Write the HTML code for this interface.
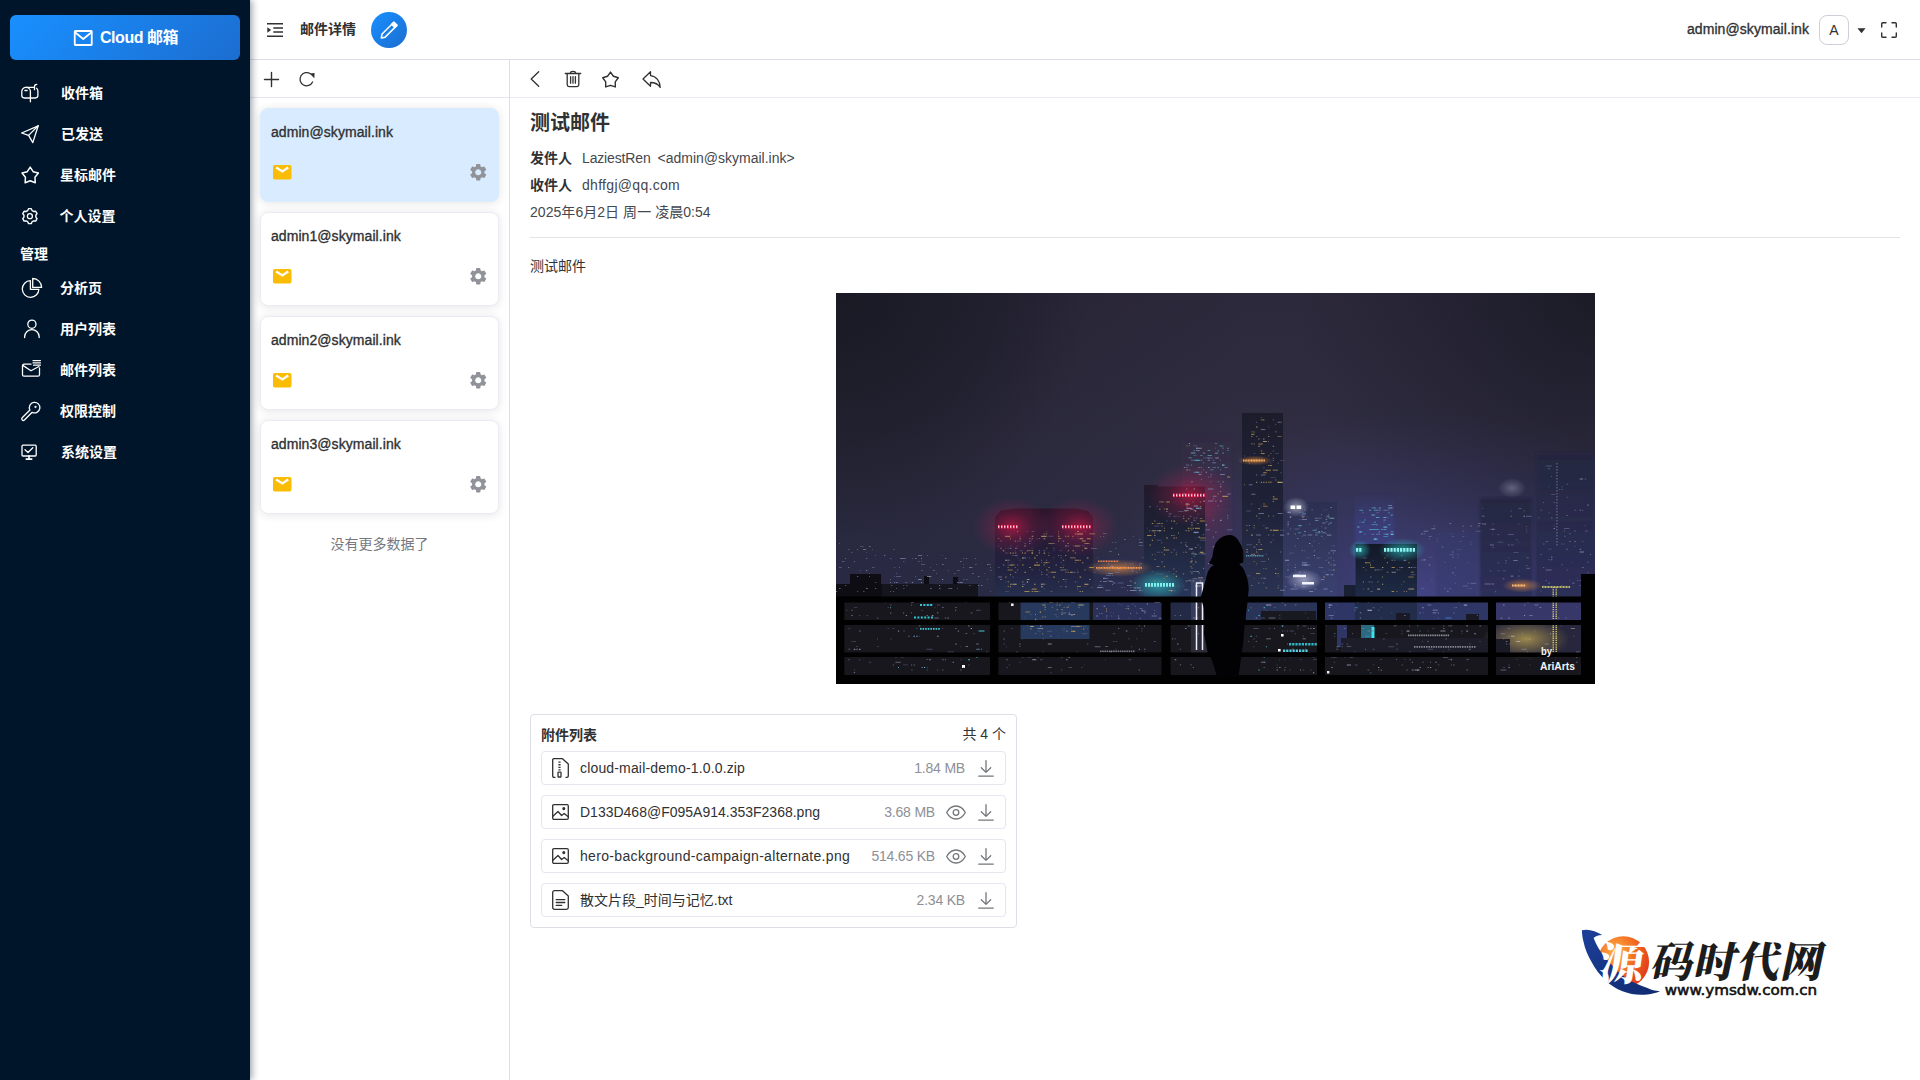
<!DOCTYPE html>
<html lang="zh-CN">
<head>
<meta charset="utf-8">
<title>Cloud 邮箱</title>
<style>
*{box-sizing:border-box;margin:0;padding:0}
html,body{width:1920px;height:1080px;overflow:hidden;background:#fff}
body{font-family:"Liberation Sans","Noto Sans CJK SC",sans-serif;font-size:14px;color:#303133;position:relative}
.abs{position:absolute}
svg{display:block;overflow:visible}
/* sidebar */
#side{position:absolute;left:0;top:0;width:250px;height:1080px;background:#001529;z-index:5;box-shadow:2px 0 7px rgba(0,21,41,.4)}
#logo{position:absolute;left:10px;top:15px;width:230px;height:45px;border-radius:6px;background:linear-gradient(135deg,#1890ff 0%,#1c6dd0 100%);color:#fff;font-weight:bold;font-size:16px}
#logo .t{position:absolute;left:90px;top:13px;line-height:20px;white-space:nowrap;letter-spacing:-0.45px}
.mi{position:absolute;left:0;width:250px;height:41px;color:#fff;font-weight:bold;font-size:14px}
.mi .tx{position:absolute;left:61px;top:11px;line-height:20px;white-space:nowrap}
.mi svg{position:absolute;left:20px;top:10px;width:20px;height:20px;fill:none;stroke:#fff;stroke-width:1.3;stroke-linecap:round;stroke-linejoin:round}
.grp{position:absolute;left:20px;top:244px;color:#fff;font-weight:bold;font-size:14px;line-height:20px}
/* header */
#hdr{position:absolute;left:250px;top:0;width:1670px;height:60px;border-bottom:1px solid #dcdfe6;background:#fff}
/* account panel */
#acc{position:absolute;left:250px;top:60px;width:260px;height:1020px;border-right:1px solid #dcdfe6;background:#fff}
.tb{position:absolute;left:0;top:0;height:38px;border-bottom:1px solid #e4e7ed}
.card{position:absolute;left:10px;width:239px;height:94px;border-radius:8px;background:#fff;border:1px solid #e9ecf3;box-shadow:0 1px 10px rgba(0,0,0,.11)}
.card.on{background:#d9ecff;border-color:#d9ecff}
.card .em{position:absolute;left:10px;top:12.500px;font-size:14px;font-weight:normal;-webkit-text-stroke:0.35px #303133;color:#303133;line-height:20px;white-space:nowrap;letter-spacing:0.07px}
.card .env{position:absolute;left:11.500px;top:56.300px}
.card .gear{position:absolute;left:206.700px;top:53.400px}
/* mail */
#mail{position:absolute;left:510px;top:60px;width:1410px;height:1020px;background:#fff}
.row{position:absolute;left:10px;width:465px;height:34px;border:1px solid #e4e7ed;border-radius:4px;background:#fff}
.row .nm{position:absolute;left:38px;top:6px;line-height:20px;font-size:14px;color:#303133;white-space:nowrap}
.row .sz{position:absolute;top:6px;line-height:20px;font-size:14px;color:#8d9097;white-space:nowrap;text-align:right;letter-spacing:-0.2px}
.row svg{position:absolute}
</style>
</head>
<body>

<!-- ============ SIDEBAR ============ -->
<div id="side">
  <div id="logo">
    <svg class="abs" style="left:62.500px;top:15px" width="20.500" height="16" viewBox="0 0 19 16" fill="none" stroke="#fff" stroke-width="1.800" stroke-linejoin="round" stroke-linecap="round"><rect x="1" y="1" width="17" height="14" rx=".5"/><path d="M1.5 2.5 9.5 9l8-6.5"/></svg>
    <span class="t">Cloud 邮箱</span>
  </div>
  <div class="mi" style="top:72px"><svg viewBox="0 0 20 20"><path d="M6 5.400C3.500 5.400 1.800 7.300 1.800 9.600v4c0 1.400 1.100 2.400 2.500 2.400h11.100c1.400 0 2.500-1 2.500-2.400V9.200c0-1.200-.5-2.300-1.300-2.900"/><path d="M6 5.400c2.500 0 4.400 1.900 4.400 4.200v10.200"/><path d="M6 5.400h8"/><path d="M14.500 7.700V4.600c0-1.300.9-2.100 2.300-2.200"/><path d="M4.900 8.500h2.200"/></svg><span class="tx">收件箱</span></div>
  <div class="mi" style="top:113px"><svg viewBox="0 0 20 20"><path d="M18.200 2.800 1.600 10l7 2.400 4.200 7.200z"/><path d="M8.600 12.400l9.600-9.600"/></svg><span class="tx">已发送</span></div>
  <div class="mi" style="top:154px"><svg viewBox="0 0 20 20"><path d="M10.20 3.15L13.14 7.70L18.38 9.09L14.96 13.30L15.25 18.71L10.20 16.75L5.15 18.71L5.44 13.30L2.02 9.09L7.26 7.70z" stroke-width="1.500"/></svg><span class="tx" style="left:60px">星标邮件</span></div>
  <div class="mi" style="top:195px"><svg viewBox="0 0 20 20"><circle cx="9.900" cy="11.150" r="2.500"/><path d="M8.55 3.67L11.25 3.67L12.09 5.56L13.64 6.46L15.70 6.24L17.05 8.58L15.83 10.26L15.83 12.04L17.05 13.72L15.70 16.06L13.64 15.84L12.09 16.74L11.25 18.63L8.55 18.63L7.71 16.74L6.16 15.84L4.10 16.06L2.75 13.72L3.97 12.04L3.97 10.26L2.75 8.58L4.10 6.24L6.16 6.46L7.71 5.56z" stroke-width="1.400"/></svg><span class="tx" style="left:59.5px">个人设置</span></div>
  <div class="grp">管理</div>
  <div class="mi" style="top:267px"><svg viewBox="0 0 20 20"><path d="M10.400 3.700A8.300 8.300 0 1 0 18.900 12.300H10.400z"/><path d="M12.700 1.500v8.900h8.900a8.900 8.900 0 0 0-8.900-8.900z"/></svg><span class="tx" style="left:60px">分析页</span></div>
  <div class="mi" style="top:308px"><svg viewBox="0 0 20 20"><circle cx="11.900" cy="6.200" r="4.100"/><path d="M4.600 19.500v-.6a7.300 7.300 0 0 1 14.600 0v.6"/></svg><span class="tx" style="left:60px">用户列表</span></div>
  <div class="mi" style="top:349px"><svg viewBox="0 0 20 20"><path d="M11 5.200H4c-.9 0-1.500.6-1.500 1.500v9c0 .9.600 1.500 1.500 1.500h14c.9 0 1.500-.6 1.500-1.500V9"/><path d="M2.800 6.400l8.200 5.400 7.900-4.300"/><path d="M13 1.600h7.400M13 3.900h7.400M13.500 6.200h6.900"/></svg><span class="tx" style="left:60px">邮件列表</span></div>
  <div class="mi" style="top:390px"><svg viewBox="0 0 20 20"><path d="M12.160 12.300 4.430 20.030a1.600 1.600 0 0 1-2.260-2.260L9.900 10.040a5.300 5.300 0 1 1 2.260 2.260z"/><circle cx="15.400" cy="6.900" r=".7" fill="#fff" stroke-width=".8"/></svg><span class="tx" style="left:60px">权限控制</span></div>
  <div class="mi" style="top:431px"><svg viewBox="0 0 20 20"><rect x="2" y="4.200" width="14.200" height="10.800" rx="1"/><path d="M6.200 18.100h5.600M9 15v3" stroke-width="1.600"/><path d="M5 8.700l3 2.800 4.800-4.700"/></svg><span class="tx">系统设置</span></div>
</div>

<!-- ============ HEADER ============ -->
<div id="hdr">
  <svg class="abs" style="left:17px;top:22px" width="16" height="16" viewBox="0 0 16 16" fill="none" stroke="#303133" stroke-width="1.4"><path d="M0 1.800h16M6.300 6h9.700M6.300 10h9.700M0 14.200h16"/><path d="M0.300 5.300v5.400L4.200 8z" fill="#303133" stroke="none"/></svg>
  <div class="abs" style="left:50px;top:19px;line-height:20px;font-weight:bold;font-size:14px;color:#303133;white-space:nowrap">邮件详情</div>
  <div class="abs" style="left:121px;top:12px;width:36px;height:36px;border-radius:50%;background:linear-gradient(135deg,#1890ff 0%,#1c6dd0 100%)">
    <svg class="abs" style="left:7px;top:7px" width="22" height="22" viewBox="0 0 20 20" fill="none" stroke="#fff" stroke-width="1.400" stroke-linejoin="round"><path d="M3 17.200l.7-3.500L14.400 3l2.800 2.800L6.500 16.500z"/><path d="M12.500 4.900l2.800 2.800 1.900-1.900L14.400 3z" fill="#fff"/></svg>
  </div>
  <div class="abs" style="left:1437px;top:19px;line-height:20px;font-weight:normal;-webkit-text-stroke:0.35px #303133;font-size:14px;color:#303133;white-space:nowrap;letter-spacing:0.07px">admin@skymail.ink</div>
  <div class="abs" style="left:1569px;top:15px;width:30px;height:30px;border:1px solid #cdd0d6;border-radius:8px;text-align:center;line-height:28px;font-size:14px;color:#303133">A</div>
  <svg class="abs" style="left:1606.500px;top:28px" width="9" height="5.500" viewBox="0 0 10 6"><path d="M0.500 0.300h9L5 5.700z" fill="#303133"/></svg>
  <svg class="abs" style="left:1631px;top:22px" width="16" height="16" viewBox="0 0 16 16" fill="none" stroke="#303133" stroke-width="1.400" stroke-linecap="round" stroke-linejoin="round"><path d="M0.700 5V1.700c0-.6.400-1 1-1H5M11 .7h3.300c.6 0 1 .4 1 1V5M15.300 11v3.300c0 .6-.4 1-1 1H11M5 15.300H1.700c-.6 0-1-.4-1-1V11"/></svg>
</div>

<!-- ============ ACCOUNT LIST ============ -->
<div id="acc">
  <div class="tb" style="width:259px"></div>
  <svg class="abs" style="left:14px;top:12px" width="15" height="15" viewBox="0 0 15 15" fill="none" stroke="#303133" stroke-width="1.400" stroke-linecap="round"><path d="M7.500 0.500v14M0.500 7.500h14"/></svg>
  <svg class="abs" style="left:49px;top:11px" width="16" height="16" viewBox="0 0 16 16" fill="none" stroke="#303133" stroke-width="1.300" stroke-linecap="round"><path d="M11.390 2.790A6.600 6.600 0 1 0 13.580 10.990"/><path d="M10.700 2.600l4.900-.500-.300 5.100z" fill="#303133" stroke="none"/></svg>
  <div class="card on" style="top:48px"><span class="em">admin@skymail.ink</span><svg class="env" width="18.500" height="14.600" viewBox="0 0 19 15" preserveAspectRatio="none"><rect x="0" y="0" width="19" height="15" rx="1.800" fill="#fbbc05"/><path d="M3.300 2.600 9.500 6.700l6.200-4.100" fill="none" stroke="#fff" stroke-width="2.300"/></svg><svg class="gear" width="20.500" height="20.500" viewBox="0 0 24 24"><path fill="#909399" d="M19.140 12.940c.040-.300.060-.610.060-.940 0-.320-.020-.640-.070-.940l2.030-1.580a.490.490 0 0 0 .120-.610l-1.920-3.320a.488.488 0 0 0-.590-.220l-2.390.960c-.500-.380-1.030-.700-1.620-.940l-.360-2.540a.484.484 0 0 0-.480-.410h-3.840c-.240 0-.430.170-.470.410l-.360 2.540c-.590.240-1.130.570-1.620.940l-2.390-.960c-.220-.080-.470 0-.590.220L2.740 8.870c-.120.210-.080.470.120.610l2.030 1.580c-.050.300-.090.630-.090.940s.020.640.070.940l-2.030 1.580a.490.490 0 0 0-.120.610l1.920 3.320c.120.220.370.290.590.220l2.390-.960c.500.380 1.030.700 1.620.940l.360 2.540c.050.240.240.410.480.410h3.840c.240 0 .440-.170.470-.410l.360-2.540c.590-.240 1.130-.560 1.620-.940l2.390.960c.220.080.470 0 .590-.220l1.920-3.320c.120-.220.070-.470-.120-.610l-2.010-1.580zM12 15.600c-1.980 0-3.600-1.620-3.600-3.600s1.620-3.600 3.600-3.600 3.600 1.620 3.600 3.600-1.620 3.600-3.600 3.600z"/></svg></div>
  <div class="card" style="top:152px"><span class="em">admin1@skymail.ink</span><svg class="env" width="18.500" height="14.600" viewBox="0 0 19 15" preserveAspectRatio="none"><rect x="0" y="0" width="19" height="15" rx="1.800" fill="#fbbc05"/><path d="M3.300 2.600 9.500 6.700l6.200-4.100" fill="none" stroke="#fff" stroke-width="2.300"/></svg><svg class="gear" width="20.500" height="20.500" viewBox="0 0 24 24"><path fill="#909399" d="M19.140 12.940c.040-.300.060-.610.060-.940 0-.320-.020-.640-.070-.940l2.030-1.580a.490.490 0 0 0 .120-.610l-1.920-3.320a.488.488 0 0 0-.590-.220l-2.390.960c-.500-.380-1.030-.700-1.620-.940l-.360-2.540a.484.484 0 0 0-.480-.410h-3.840c-.240 0-.430.170-.470.410l-.360 2.540c-.590.240-1.130.570-1.620.940l-2.390-.960c-.220-.080-.470 0-.590.220L2.740 8.870c-.120.210-.080.470.120.610l2.030 1.580c-.050.300-.090.630-.090.940s.020.640.070.940l-2.030 1.580a.490.490 0 0 0-.120.610l1.920 3.320c.120.220.370.290.590.220l2.390-.960c.500.380 1.030.700 1.620.940l.360 2.540c.050.240.240.410.480.410h3.840c.240 0 .440-.170.470-.410l.360-2.540c.590-.240 1.130-.560 1.620-.940l2.390.960c.220.080.470 0 .590-.220l1.920-3.320c.120-.220.070-.470-.120-.610l-2.010-1.580zM12 15.600c-1.980 0-3.600-1.620-3.600-3.600s1.620-3.600 3.600-3.600 3.600 1.620 3.600 3.600-1.620 3.600-3.600 3.600z"/></svg></div>
  <div class="card" style="top:256px"><span class="em">admin2@skymail.ink</span><svg class="env" width="18.500" height="14.600" viewBox="0 0 19 15" preserveAspectRatio="none"><rect x="0" y="0" width="19" height="15" rx="1.800" fill="#fbbc05"/><path d="M3.300 2.600 9.500 6.700l6.200-4.100" fill="none" stroke="#fff" stroke-width="2.300"/></svg><svg class="gear" width="20.500" height="20.500" viewBox="0 0 24 24"><path fill="#909399" d="M19.140 12.940c.040-.300.060-.610.060-.940 0-.320-.020-.640-.070-.940l2.030-1.580a.490.490 0 0 0 .120-.610l-1.920-3.320a.488.488 0 0 0-.590-.220l-2.390.960c-.500-.380-1.030-.700-1.620-.940l-.360-2.540a.484.484 0 0 0-.480-.410h-3.840c-.240 0-.430.170-.470.410l-.360 2.540c-.590.240-1.130.570-1.620.940l-2.390-.960c-.220-.080-.470 0-.590.220L2.740 8.870c-.120.210-.080.470.120.610l2.030 1.580c-.050.300-.090.630-.090.940s.020.640.070.940l-2.030 1.580a.490.490 0 0 0-.120.610l1.920 3.320c.120.220.370.290.590.220l2.390-.960c.500.380 1.030.700 1.620.940l.360 2.540c.050.240.240.410.480.410h3.840c.240 0 .440-.170.470-.410l.360-2.540c.590-.240 1.130-.560 1.620-.940l2.390.960c.220.080.470 0 .590-.220l1.920-3.320c.120-.220.070-.470-.120-.610l-2.010-1.580zM12 15.600c-1.980 0-3.600-1.620-3.600-3.600s1.620-3.600 3.600-3.600 3.600 1.620 3.600 3.600-1.620 3.600-3.600 3.600z"/></svg></div>
  <div class="card" style="top:360px"><span class="em">admin3@skymail.ink</span><svg class="env" width="18.500" height="14.600" viewBox="0 0 19 15" preserveAspectRatio="none"><rect x="0" y="0" width="19" height="15" rx="1.800" fill="#fbbc05"/><path d="M3.300 2.600 9.500 6.700l6.200-4.100" fill="none" stroke="#fff" stroke-width="2.300"/></svg><svg class="gear" width="20.500" height="20.500" viewBox="0 0 24 24"><path fill="#909399" d="M19.140 12.940c.040-.300.060-.610.060-.940 0-.320-.020-.640-.070-.940l2.030-1.580a.490.490 0 0 0 .120-.610l-1.920-3.320a.488.488 0 0 0-.590-.220l-2.390.960c-.500-.380-1.030-.700-1.620-.940l-.360-2.540a.484.484 0 0 0-.480-.410h-3.840c-.240 0-.430.170-.470.410l-.360 2.540c-.590.240-1.130.570-1.620.940l-2.390-.960c-.220-.080-.470 0-.590.220L2.740 8.870c-.120.210-.080.470.120.610l2.030 1.580c-.050.300-.090.630-.090.940s.020.640.070.940l-2.030 1.580a.490.490 0 0 0-.120.610l1.920 3.320c.120.220.370.290.590.220l2.390-.960c.500.380 1.030.700 1.620.940l.360 2.540c.050.240.240.410.480.410h3.840c.240 0 .440-.170.470-.410l.360-2.540c.590-.240 1.130-.560 1.620-.940l2.390.960c.220.080.470 0 .590-.220l1.920-3.320c.120-.220.070-.470-.120-.610l-2.010-1.580zM12 15.600c-1.980 0-3.600-1.620-3.600-3.600s1.620-3.600 3.600-3.600 3.600 1.620 3.600 3.600-1.620 3.600-3.600 3.600z"/></svg></div>
  <div class="abs" style="left:0;top:474px;width:259px;text-align:center;line-height:20px;font-size:14px;color:#76797f">没有更多数据了</div>
</div>

<!-- ============ MAIL DETAIL ============ -->
<div id="mail">
  <div class="abs" style="left:0;top:37px;width:1410px;height:1px;background:#e9ebf0"></div>
  <svg class="abs" style="left:20px;top:11px" width="10" height="16" viewBox="0 0 10 16" fill="none" stroke="#303133" stroke-width="1.300" stroke-linecap="round" stroke-linejoin="round"><path d="M8.700 0.700 1.200 8l7.500 7.300"/></svg>
  <svg class="abs" style="left:55px;top:11px" width="16" height="16" viewBox="0 0 16 16" fill="none" stroke="#303133" stroke-width="1.300" stroke-linecap="round" stroke-linejoin="round"><path d="M0.300 2.500h15.400M5.200 2.300C5.400 1 6.500.4 8 .4s2.600.6 2.800 1.900M2.200 2.700v11.100c0 1.100.7 1.800 1.800 1.800h8c1.100 0 1.800-.7 1.800-1.800V2.700M5.600 5.600v6.600M8 5.600v6.600M10.400 5.600v6.600"/></svg>
  <svg class="abs" style="left:92px;top:11px" width="17" height="17" viewBox="0 0 17 17" fill="none" stroke="#303133" stroke-width="1.300" stroke-linecap="round" stroke-linejoin="round"><path d="M8.50 1.10L11.44 5.25L16.30 6.77L13.26 10.85L13.32 15.93L8.50 14.30L3.68 15.93L3.74 10.85L0.70 6.77L5.56 5.25z" stroke-width="1.400"/></svg>
  <svg class="abs" style="left:132px;top:11px" width="19" height="17" viewBox="0 0 19 17" fill="none" stroke="#303133" stroke-width="1.300" stroke-linecap="round" stroke-linejoin="round"><path d="M8.500 0.700 1 8l7.500 7.300v-3.800c4.300 0 7.600 1.400 9.700 4.900 0-6.300-4.100-11.200-9.700-11.800z"/></svg>
  <div class="abs" style="left:20px;top:49px;line-height:28px;font-size:20px;font-weight:bold;color:#303133;white-space:nowrap">测试邮件</div>
  <div class="abs" style="left:20px;top:88px;line-height:20px;font-size:14px;font-weight:bold;color:#303133;white-space:nowrap">发件人</div>
  <div class="abs" style="left:72px;top:88px;line-height:20px;font-size:14px;color:#45484d;white-space:nowrap"><span style="letter-spacing:-0.15px">LaziestRen</span><span style="position:absolute;left:75.500px">&lt;admin@skymail.ink&gt;</span></div>
  <div class="abs" style="left:20px;top:115px;line-height:20px;font-size:14px;font-weight:bold;color:#303133;white-space:nowrap">收件人</div>
  <div class="abs" style="left:72px;top:115px;line-height:20px;font-size:14px;color:#45484d;white-space:nowrap;letter-spacing:0.3px">dhffgj@qq.com</div>
  <div class="abs" style="left:20px;top:142px;line-height:20px;font-size:14px;color:#45484d;white-space:nowrap;letter-spacing:0.05px">2025年6月2日 周一 凌晨0:54</div>
  <div class="abs" style="left:20px;top:177px;width:1370px;height:1px;background:#e3e3e5"></div>
  <div class="abs" style="left:20px;top:196px;line-height:20px;font-size:14px;color:#303133;white-space:nowrap">测试邮件</div>
  <div class="abs" id="pic" style="left:326px;top:233px;width:759px;height:391px;background:#25213a;overflow:hidden">
<svg width="759" height="391" viewBox="0 0 759 391" style="position:absolute;left:0;top:0">
<defs>
<linearGradient id="sky" x1="0" y1="0" x2="0" y2="1"><stop offset="0" stop-color="#2d293c"/><stop offset=".4" stop-color="#302d42"/><stop offset=".78" stop-color="#2b2d48"/><stop offset="1" stop-color="#292b46"/></linearGradient>
<radialGradient id="gblue" cx="585" cy="300" r="330" gradientUnits="userSpaceOnUse" gradientTransform="translate(585 300) scale(1 .55) translate(-585 -300)"><stop offset="0" stop-color="#4a4a96" stop-opacity=".75"/><stop offset=".5" stop-color="#40407e" stop-opacity=".4"/><stop offset="1" stop-color="#40407e" stop-opacity="0"/></radialGradient>
<radialGradient id="gdark" cx="0" cy="0" r="420" gradientUnits="userSpaceOnUse"><stop offset="0" stop-color="#12141c" stop-opacity=".74"/><stop offset=".35" stop-color="#12141c" stop-opacity=".48"/><stop offset=".6" stop-color="#12141c" stop-opacity=".14"/><stop offset="1" stop-color="#12141c" stop-opacity="0"/></radialGradient>
<radialGradient id="gdark2" cx="759" cy="0" r="300" gradientUnits="userSpaceOnUse"><stop offset="0" stop-color="#12141c" stop-opacity=".66"/><stop offset=".5" stop-color="#12141c" stop-opacity=".3"/><stop offset="1" stop-color="#12141c" stop-opacity="0"/></radialGradient>
<radialGradient id="gred"><stop offset="0" stop-color="#e81848" stop-opacity=".6"/><stop offset=".5" stop-color="#c81c50" stop-opacity=".22"/><stop offset="1" stop-color="#c0245e" stop-opacity="0"/></radialGradient>
<radialGradient id="gteal"><stop offset="0" stop-color="#30d8d8" stop-opacity=".6"/><stop offset="1" stop-color="#30d8d8" stop-opacity="0"/></radialGradient>
<radialGradient id="gwhite"><stop offset="0" stop-color="#e8e8ff" stop-opacity=".55"/><stop offset="1" stop-color="#e8e8ff" stop-opacity="0"/></radialGradient>
<radialGradient id="gorange"><stop offset="0" stop-color="#ff9a3c" stop-opacity=".6"/><stop offset="1" stop-color="#ff9a3c" stop-opacity="0"/></radialGradient>
<radialGradient id="gwarm"><stop offset="0" stop-color="#b09a50" stop-opacity=".85"/><stop offset="1" stop-color="#a08850" stop-opacity="0"/></radialGradient>
<linearGradient id="b1" x1="0" y1="0" x2="0" y2="1"><stop offset="0" stop-color="#2a1529"/><stop offset=".3" stop-color="#241a34"/><stop offset=".7" stop-color="#222340"/><stop offset="1" stop-color="#26304f"/></linearGradient>
<linearGradient id="b2" x1="0" y1="0" x2="0" y2="1"><stop offset="0" stop-color="#221a2c"/><stop offset=".35" stop-color="#1d2033"/><stop offset="1" stop-color="#283658"/></linearGradient>
<linearGradient id="b3" x1="0" y1="0" x2="0" y2="1"><stop offset="0" stop-color="#1c1c2b"/><stop offset=".5" stop-color="#1f2238"/><stop offset="1" stop-color="#2a3353"/></linearGradient>
<linearGradient id="b4" x1="0" y1="0" x2="0" y2="1"><stop offset="0" stop-color="#2c2f50"/><stop offset="1" stop-color="#3a4270"/></linearGradient>
<linearGradient id="b5" x1="0" y1="0" x2="0" y2="1"><stop offset="0" stop-color="#121826"/><stop offset="1" stop-color="#1f2b48"/></linearGradient>
<linearGradient id="bfar" x1="0" y1="0" x2="0" y2="1"><stop offset="0" stop-color="#242640" stop-opacity=".9"/><stop offset="1" stop-color="#2c2f58" stop-opacity=".95"/></linearGradient>
<linearGradient id="bpink" x1="0" y1="0" x2="0" y2="1"><stop offset="0" stop-color="#4a2f5a" stop-opacity="0"/><stop offset=".35" stop-color="#43304f" stop-opacity=".38"/><stop offset=".75" stop-color="#3a3458" stop-opacity=".6"/><stop offset="1" stop-color="#30325a" stop-opacity=".8"/></linearGradient>
<linearGradient id="bblue" x1="0" y1="0" x2="0" y2="1"><stop offset="0" stop-color="#3a3f80" stop-opacity="0"/><stop offset=".3" stop-color="#3a3f80" stop-opacity=".7"/><stop offset="1" stop-color="#3a4684" stop-opacity=".9"/></linearGradient>
<filter id="bl2" x="-20%" y="-20%" width="140%" height="140%"><feGaussianBlur stdDeviation="1.2"/></filter>
<filter id="bl1" x="-50%" y="-200%" width="200%" height="500%"><feGaussianBlur stdDeviation="1.8"/></filter>
</defs>
<rect width="759" height="391" fill="url(#sky)"/>
<rect width="759" height="391" fill="url(#gblue)"/>
<rect width="759" height="391" fill="url(#gdark)"/>
<rect width="759" height="391" fill="url(#gdark2)"/>
<rect x="0" y="262" width="70" height="42" fill="#2b2944" opacity=".6"/>
<rect x="644" y="205" width="52" height="100" fill="url(#bfar)" filter="url(#bl2)"/>
<rect x="700" y="160" width="59" height="145" fill="url(#bfar)" filter="url(#bl2)"/>
<rect x="600" y="240" width="40" height="65" fill="#363a6c" opacity=".5" filter="url(#bl2)"/>
<rect x="346" y="137" width="49" height="168" fill="url(#bpink)" filter="url(#bl2)"/>
<ellipse cx="372" cy="222" rx="36" ry="52" fill="url(#gred)" opacity=".26"/>
<rect x="519" y="200" width="39" height="105" fill="url(#bblue)" filter="url(#bl2)"/>
<rect x="447" y="209" width="54" height="96" fill="url(#b4)"/>
<rect x="259" y="266" width="49" height="39" fill="#2a2d4e"/>
<rect x="508" y="292" width="14" height="13" fill="#1a2034"/>
<rect x="519.500" y="251" width="61.500" height="54" fill="url(#b5)"/>
<rect x="406" y="120" width="41" height="185" fill="url(#b3)"/>
<path d="M308 305V192h14v1.500h47V305z" fill="url(#b2)"/>
<path d="M159 305V224l6-6.500 14-2h61l12 2.500 5 6V305z" fill="url(#b1)"/>
<ellipse cx="176" cy="234" rx="40" ry="30" fill="url(#gred)"/>
<ellipse cx="243" cy="234" rx="40" ry="30" fill="url(#gred)"/>
<ellipse cx="354" cy="202" rx="42" ry="32" fill="url(#gred)"/>
<ellipse cx="322" cy="292" rx="28" ry="16" fill="url(#gteal)"/>
<ellipse cx="566" cy="257" rx="24" ry="12" fill="url(#gteal)"/>
<ellipse cx="524" cy="257" rx="11" ry="10" fill="url(#gteal)"/>
<ellipse cx="460" cy="214" rx="13" ry="10" fill="url(#gwhite)"/>
<ellipse cx="468" cy="287" rx="18" ry="11" fill="url(#gwhite)"/>
<ellipse cx="283" cy="275" rx="34" ry="9" fill="url(#gorange)"/>
<ellipse cx="419" cy="167.500" rx="18" ry="5" fill="url(#gorange)"/>
<ellipse cx="686" cy="292.500" rx="20" ry="7" fill="url(#gorange)"/>
<ellipse cx="676" cy="195" rx="14" ry="10" fill="url(#gwhite)" opacity=".5"/>
<rect x="0" y="305" width="759" height="86" fill="#17171d"/>
<rect x="184.500" y="305" width="69" height="41" fill="#27395c"/>
<rect x="257" y="305" width="73" height="23" fill="#2a3058"/>
<rect x="410" y="305" width="72" height="23" fill="#2a3358"/>
<rect x="334" y="305" width="27" height="23" fill="#222a46"/>
<rect x="489" y="305" width="163" height="23" fill="#2e3666"/>
<rect x="501" y="328" width="10" height="26" fill="#2e3666"/>
<rect x="519" y="305" width="62" height="23" fill="#222d4c"/>
<rect x="660" y="305" width="86" height="23" fill="#37376a"/>
<rect x="660" y="332" width="86" height="28" fill="#26263c"/>
<ellipse cx="690" cy="346" rx="44" ry="20" fill="url(#gwarm)"/>
<rect x="525" y="332" width="13" height="14" fill="#2a6a80"/><rect x="535.500" y="334" width="3" height="12" fill="#40e0e8"/>
<path d="M0 305v-14h14v-10h31v10h43v-8h5v8h24v-7h5v7h20v14z" fill="#0d0d13"/>
<rect x="46" y="291" width="96" height="14" fill="#15151e"/>
<rect x="425" y="318" width="55" height="11" fill="#191922"/>
<rect x="505" y="345" width="148" height="16" fill="#1d1d29"/>
<rect x="560" y="320" width="14" height="10" fill="#1a1a26"/><rect x="630" y="321" width="13" height="9" fill="#1a1a26"/>
<rect x="660" y="346" width="14" height="14" fill="#1a1a26"/>
<path fill="#8a8fb6" opacity=".62" d="M21.0 256.0h0.9v0.9h-0.9zM9.0 265.0h1.0v1.0h-1.0zM30.0 265.0h1.2v1.1h-1.2zM48.0 262.0h1.3v1.1h-1.3zM33.0 253.0h1.5v1.1h-1.5zM21.0 283.0h1.3v1.1h-1.3zM63.0 274.0h0.9v1.0h-0.9zM18.0 268.0h0.9v1.0h-0.9zM60.0 289.0h1.1v0.9h-1.1zM39.0 295.0h1.3v1.0h-1.3zM3.0 295.0h1.6v0.9h-1.6zM27.0 256.0h3.2v0.9h-3.2zM54.0 289.0h1.0v0.9h-1.0zM33.0 283.0h0.9v1.1h-0.9zM57.0 298.0h1.1v0.8h-1.1zM0.0 298.0h1.3v1.0h-1.3zM12.0 274.0h1.3v1.0h-1.3zM136.0 280.0h1.5v1.0h-1.5zM103.0 295.0h1.6v0.9h-1.6zM112.0 295.0h4.0v0.8h-4.0zM79.0 265.0h1.5v0.9h-1.5zM82.0 262.0h4.0v1.1h-4.0zM64.0 265.0h5.8v1.0h-5.8zM139.0 265.0h0.9v1.0h-0.9zM82.0 262.0h4.2v1.1h-4.2zM124.0 289.0h1.2v1.1h-1.2zM70.0 289.0h0.8v1.1h-0.8zM121.0 289.0h0.9v1.0h-0.9zM142.0 292.0h1.3v1.0h-1.3zM142.0 283.0h1.4v1.0h-1.4zM55.0 292.0h1.3v1.0h-1.3zM124.0 289.0h3.0v0.9h-3.0zM133.0 274.0h3.4v1.0h-3.4zM151.0 271.0h0.9v1.1h-0.9zM145.0 292.0h1.6v1.0h-1.6zM130.0 265.0h1.2v1.0h-1.2zM115.0 295.0h1.2v1.0h-1.2zM106.0 286.0h1.0v0.9h-1.0zM94.0 295.0h1.6v0.9h-1.6zM124.0 268.0h1.5v0.9h-1.5zM154.0 274.0h1.0v1.1h-1.0zM273.0 288.0h4.2v0.9h-4.2zM264.0 288.0h1.5v1.0h-1.5zM267.0 288.0h4.2v1.1h-4.2zM303.0 276.0h0.9v0.9h-0.9zM276.0 291.0h1.0v0.9h-1.0zM258.0 273.0h0.8v0.8h-0.8zM288.0 273.0h1.1v1.0h-1.1zM267.0 285.0h4.2v0.8h-4.2zM288.0 246.0h1.5v0.8h-1.5zM303.0 249.0h3.7v1.1h-3.7zM659.0 298.2h1.1v1.0h-1.1zM690.2 264.4h2.6v0.9h-2.6zM669.4 269.6h1.0v0.9h-1.0zM648.6 290.4h5.5v1.1h-5.5zM661.6 277.4h1.6v0.9h-1.6zM672.0 251.4h1.3v1.0h-1.3zM690.2 233.2h0.8v0.9h-0.8zM679.8 293.0h1.1v0.9h-1.1zM656.4 290.4h1.4v1.1h-1.4zM666.8 285.2h1.6v1.1h-1.6zM677.2 267.0h4.6v0.9h-4.6zM674.6 282.6h2.8v1.1h-2.8zM646.0 230.6h4.2v1.0h-4.2zM674.6 222.8h1.4v1.0h-1.4zM653.8 251.4h4.1v1.1h-4.1zM715.0 263.6h1.5v1.1h-1.5zM725.4 271.4h1.4v0.9h-1.4zM730.6 190.8h1.6v0.8h-1.6zM733.2 240.2h1.3v1.1h-1.3zM746.2 216.8h1.0v0.9h-1.0zM709.8 276.6h5.8v1.0h-5.8zM709.8 287.0h1.0v1.0h-1.0zM738.4 237.6h1.2v1.0h-1.2zM730.6 255.8h1.1v1.1h-1.1zM707.2 250.6h0.8v1.0h-0.8zM704.6 261.0h1.1v0.9h-1.1zM728.0 237.6h1.0v0.9h-1.0zM717.6 209.0h1.4v0.8h-1.4zM712.4 289.6h1.4v1.1h-1.4zM733.2 248.0h1.4v1.0h-1.4zM743.6 287.0h1.1v1.1h-1.1zM712.4 175.2h1.4v1.1h-1.4zM707.2 250.6h1.2v0.9h-1.2zM707.2 209.0h0.9v1.0h-0.9zM704.6 216.8h1.2v0.9h-1.2zM743.6 216.8h1.4v0.9h-1.4zM743.6 292.2h1.3v0.8h-1.3zM754.0 261.0h1.1v1.1h-1.1zM715.0 224.6h1.5v0.8h-1.5zM746.2 274.0h1.3v1.1h-1.3zM707.2 274.0h1.0v1.1h-1.0zM738.4 216.8h1.2v0.9h-1.2zM748.8 232.4h1.0v0.9h-1.0zM751.4 268.8h1.7v0.8h-1.7zM634.4 232.6h1.4v1.1h-1.4zM587.6 240.4h1.6v0.9h-1.6zM642.2 230.0h2.5v1.1h-2.5zM592.8 243.0h2.8v0.8h-2.8zM626.6 232.6h1.1v1.1h-1.1zM634.4 250.8h1.1v0.8h-1.1zM587.6 237.8h4.6v1.0h-4.6zM608.4 295.0h1.1v0.9h-1.1zM611.0 297.6h1.6v1.1h-1.6zM631.8 289.8h0.8v0.9h-0.8zM595.4 235.2h3.9v1.0h-3.9zM605.8 253.4h1.4v1.1h-1.4zM616.2 279.4h1.5v1.1h-1.5zM613.6 295.0h1.2v1.1h-1.2z"/>
<path fill="#6a6f96" opacity=".62" d="M3.0 274.0h2.8v0.9h-2.8zM57.0 256.0h1.4v1.0h-1.4zM27.0 298.0h1.6v0.9h-1.6zM24.0 277.0h0.9v1.0h-0.9zM21.0 298.0h1.2v0.9h-1.2zM69.0 289.0h1.1v0.8h-1.1zM30.0 259.0h0.9v0.8h-0.9zM60.0 295.0h1.0v0.9h-1.0zM33.0 280.0h0.8v0.9h-0.8zM24.0 253.0h3.8v0.8h-3.8zM60.0 280.0h1.0v0.9h-1.0zM6.0 268.0h2.6v1.1h-2.6zM36.0 256.0h0.8v1.1h-0.8zM60.0 283.0h5.2v1.0h-5.2zM54.0 265.0h1.5v1.1h-1.5zM3.0 250.0h1.0v1.1h-1.0zM15.0 259.0h1.4v1.1h-1.4zM54.0 286.0h1.0v0.9h-1.0zM54.0 298.0h1.2v1.1h-1.2zM12.0 256.0h1.6v0.9h-1.6zM60.0 289.0h1.0v0.9h-1.0zM39.0 262.0h0.9v0.9h-0.9zM36.0 274.0h2.5v1.1h-2.5zM39.0 289.0h1.3v0.9h-1.3zM118.0 280.0h1.4v1.0h-1.4zM130.0 286.0h1.6v0.9h-1.6zM154.0 277.0h1.7v0.9h-1.7zM100.0 280.0h1.0v1.1h-1.0zM58.0 283.0h0.8v1.0h-0.8zM139.0 271.0h1.6v1.0h-1.6zM67.0 268.0h1.0v0.9h-1.0zM133.0 274.0h1.0v0.8h-1.0zM67.0 292.0h1.2v0.9h-1.2zM121.0 277.0h2.7v1.1h-2.7zM82.0 268.0h1.6v1.0h-1.6zM85.0 271.0h4.1v0.9h-4.1zM154.0 298.0h1.0v0.9h-1.0zM91.0 262.0h1.2v0.9h-1.2zM106.0 262.0h0.9v0.8h-0.9zM58.0 274.0h1.3v1.1h-1.3zM127.0 271.0h0.9v0.8h-0.9zM61.0 289.0h0.9v1.1h-0.9zM127.0 286.0h1.3v1.0h-1.3zM67.0 295.0h1.7v0.8h-1.7zM70.0 292.0h1.6v0.9h-1.6zM148.0 280.0h0.8v1.0h-0.8zM85.0 268.0h1.1v0.8h-1.1zM133.0 292.0h1.6v1.1h-1.6zM85.0 277.0h1.7v0.9h-1.7zM100.0 271.0h0.9v0.9h-0.9zM151.0 271.0h3.8v1.1h-3.8zM112.0 277.0h0.9v1.1h-0.9zM76.0 265.0h0.9v0.9h-0.9zM94.0 274.0h1.0v0.8h-1.0zM67.0 268.0h1.4v1.1h-1.4zM121.0 289.0h5.2v0.9h-5.2zM151.0 286.0h0.9v1.0h-0.9zM127.0 265.0h1.3v0.9h-1.3zM79.0 283.0h1.1v1.1h-1.1zM121.0 295.0h1.0v1.1h-1.0zM127.0 274.0h1.2v0.9h-1.2zM270.0 297.0h1.0v0.9h-1.0zM291.0 297.0h1.2v1.1h-1.2zM264.0 243.0h1.2v1.1h-1.2zM258.0 279.0h1.1v0.9h-1.1zM255.0 255.0h5.9v0.9h-5.9zM303.0 252.0h3.9v1.1h-3.9zM297.0 243.0h0.9v0.9h-0.9zM294.0 294.0h1.0v1.0h-1.0zM270.0 282.0h5.1v1.1h-5.1zM288.0 294.0h1.0v1.1h-1.0zM306.0 264.0h1.2v1.1h-1.2zM273.0 258.0h3.2v1.1h-3.2zM267.0 243.0h1.3v1.1h-1.3zM303.0 297.0h4.2v1.0h-4.2zM279.0 255.0h1.4v1.1h-1.4zM300.0 279.0h1.6v1.0h-1.6zM276.0 282.0h1.0v0.9h-1.0zM303.0 273.0h1.2v1.0h-1.2zM300.0 294.0h3.2v1.1h-3.2zM285.0 294.0h1.6v0.9h-1.6zM297.0 294.0h1.3v0.9h-1.3zM276.0 249.0h1.0v1.0h-1.0zM267.0 240.0h3.6v0.9h-3.6zM297.0 273.0h0.9v1.0h-0.9zM288.0 246.0h1.4v0.9h-1.4zM270.0 297.0h1.3v0.9h-1.3zM300.0 297.0h1.0v0.9h-1.0zM255.0 294.0h1.5v1.1h-1.5zM279.0 249.0h1.3v1.1h-1.3zM261.0 276.0h3.5v1.0h-3.5zM303.0 246.0h1.5v0.9h-1.5zM282.0 261.0h1.0v1.1h-1.0zM279.0 279.0h4.7v1.0h-4.7zM261.0 264.0h1.2v0.8h-1.2zM294.0 288.0h1.7v1.1h-1.7zM653.8 290.4h4.3v1.1h-4.3zM656.4 235.8h3.1v0.9h-3.1zM669.4 267.0h1.6v1.0h-1.6zM653.8 277.4h1.5v1.0h-1.5zM674.6 251.4h3.3v1.0h-3.3zM646.0 215.0h0.9v0.9h-0.9zM672.0 264.4h1.4v0.8h-1.4zM690.2 235.8h0.9v1.1h-0.9zM682.4 248.8h0.8v1.0h-0.8zM661.6 269.6h1.6v0.9h-1.6zM687.6 217.6h1.2v0.8h-1.2zM682.4 215.0h3.2v1.0h-3.2zM666.8 277.4h3.3v0.8h-3.3zM672.0 241.0h5.7v0.9h-5.7zM690.2 222.8h5.5v1.1h-5.5zM656.4 241.0h0.8v0.9h-0.8zM679.8 246.2h1.7v1.1h-1.7zM674.6 217.6h1.2v0.9h-1.2zM677.2 259.2h5.4v0.9h-5.4zM682.4 230.6h1.1v0.9h-1.1zM690.2 238.4h1.4v0.8h-1.4zM661.6 248.8h5.6v0.8h-5.6zM656.4 254.0h1.5v1.0h-1.5zM661.6 241.0h1.6v1.1h-1.6zM656.4 230.6h1.4v0.9h-1.4zM653.8 235.8h3.6v0.9h-3.6zM690.2 274.8h3.8v1.1h-3.8zM682.4 277.4h1.0v0.8h-1.0zM712.4 219.4h1.2v1.0h-1.2zM728.0 250.6h0.9v0.9h-0.9zM741.0 287.0h1.3v0.9h-1.3zM738.4 253.2h1.1v0.8h-1.1zM725.4 250.6h1.4v0.9h-1.4zM735.8 268.8h1.2v0.8h-1.2zM702.0 224.6h1.4v0.9h-1.4zM722.8 196.0h1.5v1.0h-1.5zM728.0 242.8h1.7v1.0h-1.7zM746.2 274.0h1.1v0.8h-1.1zM725.4 193.4h1.4v0.9h-1.4zM717.6 232.4h1.4v0.9h-1.4zM751.4 279.2h1.5v1.1h-1.5zM715.0 183.0h1.0v0.9h-1.0zM715.0 201.2h4.1v0.9h-4.1zM728.0 235.0h5.4v1.0h-5.4zM730.6 276.6h1.5v1.0h-1.5zM741.0 284.4h0.8v0.8h-0.8zM712.4 255.8h3.1v0.8h-3.1zM730.6 203.8h1.2v1.0h-1.2zM735.8 289.6h2.9v1.1h-2.9zM733.2 287.0h0.8v1.0h-0.8zM751.4 294.8h4.8v0.9h-4.8zM709.8 172.6h5.9v0.8h-5.9zM748.8 185.6h1.4v1.1h-1.4zM754.0 261.0h0.8v1.1h-0.8zM746.2 248.0h1.2v0.9h-1.2zM725.4 196.0h1.5v1.0h-1.5zM748.8 237.6h3.2v0.9h-3.2zM704.6 297.4h0.9v1.1h-0.9zM709.8 248.0h2.6v1.1h-2.6zM712.4 193.4h0.8v1.1h-0.8zM707.2 292.2h1.3v1.1h-1.3zM624.0 256.0h0.9v1.1h-0.9zM598.0 232.6h1.1v1.1h-1.1zM618.8 282.0h1.1v0.8h-1.1zM613.6 240.4h0.9v0.8h-0.9zM626.6 243.0h1.6v1.1h-1.6zM634.4 289.8h5.8v1.1h-5.8zM621.4 261.2h1.5v1.0h-1.5zM592.8 245.6h1.4v0.9h-1.4zM634.4 248.2h0.9v1.1h-0.9zM603.2 240.4h1.1v0.8h-1.1zM600.6 248.2h1.1v1.1h-1.1zM639.6 237.8h5.0v0.9h-5.0zM616.2 243.0h1.6v1.0h-1.6zM621.4 263.8h1.0v1.0h-1.0zM631.8 269.0h0.9v0.9h-0.9zM595.4 287.2h0.9v1.0h-0.9zM585.0 266.4h5.0v1.1h-5.0zM634.4 295.0h1.3v1.0h-1.3zM585.0 295.0h3.4v1.1h-3.4zM616.2 279.4h1.6v0.8h-1.6zM592.8 263.8h3.9v0.8h-3.9zM618.8 289.8h1.3v0.9h-1.3zM631.8 295.0h1.2v1.0h-1.2zM621.4 256.0h0.9v1.0h-0.9zM624.0 248.2h1.6v0.9h-1.6zM616.2 240.4h0.9v0.9h-0.9zM600.6 245.6h1.3v1.0h-1.3zM618.8 274.2h1.4v1.0h-1.4zM621.4 261.2h1.0v1.0h-1.0zM608.4 269.0h1.1v0.9h-1.1zM616.2 263.8h1.7v1.1h-1.7zM626.6 237.8h1.7v0.9h-1.7zM626.6 292.4h5.2v1.0h-5.2zM621.4 256.0h1.2v0.9h-1.2zM608.4 269.0h1.1v1.1h-1.1zM613.6 261.2h4.5v1.0h-4.5z"/>
<path fill="#a9aed0" opacity=".62" d="M9.0 292.0h1.2v0.8h-1.2zM30.0 295.0h1.7v0.9h-1.7zM30.0 277.0h1.2v1.0h-1.2zM109.0 265.0h1.5v0.8h-1.5zM91.0 283.0h4.3v0.9h-4.3zM106.0 286.0h1.1v1.0h-1.1zM76.0 289.0h1.2v1.0h-1.2zM103.0 292.0h1.2v0.9h-1.2zM85.0 265.0h0.9v0.9h-0.9zM85.0 289.0h1.0v0.9h-1.0zM106.0 271.0h1.7v0.8h-1.7zM97.0 277.0h1.6v0.8h-1.6zM58.0 289.0h1.2v0.8h-1.2zM82.0 286.0h3.7v0.9h-3.7zM294.0 297.0h5.8v1.1h-5.8zM261.0 294.0h5.7v0.9h-5.7zM282.0 261.0h0.9v1.1h-0.9zM690.2 272.2h1.0v0.8h-1.0zM687.6 222.8h1.4v1.1h-1.4zM646.0 222.8h2.6v0.8h-2.6zM682.4 282.6h0.9v1.1h-0.9zM656.4 235.8h1.3v1.1h-1.3zM730.6 222.0h1.0v0.9h-1.0zM743.6 185.6h3.5v0.9h-3.5zM715.0 266.2h1.3v1.1h-1.3zM743.6 255.8h1.5v0.9h-1.5zM751.4 211.6h1.3v1.1h-1.3zM717.6 235.0h1.4v0.9h-1.4zM738.4 248.0h1.5v0.8h-1.5zM743.6 258.4h4.4v1.1h-4.4zM712.4 266.2h1.0v1.0h-1.0zM725.4 292.2h0.9v0.9h-0.9zM642.2 232.6h1.4v1.0h-1.4zM613.6 230.0h1.2v0.9h-1.2zM587.6 266.4h1.6v0.9h-1.6zM585.0 240.4h1.5v1.0h-1.5zM616.2 258.6h1.1v1.0h-1.1zM592.8 271.6h1.3v1.0h-1.3z"/>
<path fill="#aab0d8" opacity=".62" d="M720.5 170.0h0.9v1.5h-0.9zM720.5 173.0h0.9v1.5h-0.9zM720.5 176.0h0.9v1.5h-0.9zM720.5 179.0h0.9v1.5h-0.9zM720.5 182.0h0.9v1.5h-0.9zM720.5 185.0h0.9v1.5h-0.9zM720.5 188.0h0.9v1.5h-0.9zM720.5 191.0h0.9v1.5h-0.9zM720.5 194.0h0.9v1.5h-0.9zM720.5 197.0h0.9v1.5h-0.9zM720.5 200.0h0.9v1.5h-0.9zM720.5 203.0h0.9v1.5h-0.9zM720.5 206.0h0.9v1.5h-0.9zM720.5 209.0h0.9v1.5h-0.9zM720.5 212.0h0.9v1.5h-0.9zM720.5 215.0h0.9v1.5h-0.9zM720.5 218.0h0.9v1.5h-0.9zM720.5 221.0h0.9v1.5h-0.9zM720.5 224.0h0.9v1.5h-0.9zM720.5 227.0h0.9v1.5h-0.9zM720.5 230.0h0.9v1.5h-0.9zM720.5 233.0h0.9v1.5h-0.9zM720.5 236.0h0.9v1.5h-0.9zM720.5 239.0h0.9v1.5h-0.9zM720.5 242.0h0.9v1.5h-0.9zM720.5 245.0h0.9v1.5h-0.9zM720.5 248.0h0.9v1.5h-0.9zM720.5 251.0h0.9v1.5h-0.9z"/>
<path fill="#8e98c4" opacity=".62" d="M352.8 286.8h1.6v1.1h-1.6zM388.8 265.2h1.7v1.0h-1.7zM379.2 207.6h1.3v1.1h-1.3zM391.2 200.4h3.6v1.1h-3.6zM391.2 282.0h0.9v1.0h-0.9zM379.2 150.0h1.6v1.0h-1.6zM357.6 224.4h1.0v1.0h-1.0zM391.2 236.4h5.2v0.8h-5.2zM352.8 176.4h1.5v1.1h-1.5zM362.4 279.6h1.5v0.9h-1.5zM372.0 207.6h5.4v0.9h-5.4zM357.6 178.8h4.8v0.9h-4.8zM369.6 231.6h1.5v1.0h-1.5zM372.0 195.6h5.5v0.9h-5.5zM376.8 166.8h1.1v0.9h-1.1zM381.6 272.4h0.9v0.9h-0.9zM350.4 253.2h1.3v0.8h-1.3zM391.2 243.6h3.8v0.9h-3.8zM357.6 226.8h1.6v0.9h-1.6zM386.4 171.6h1.1v1.0h-1.1zM384.0 166.8h1.1v0.8h-1.1zM388.8 246.0h2.6v1.1h-2.6zM384.0 198.0h1.3v1.1h-1.3zM357.6 157.2h1.4v1.0h-1.4zM388.8 289.2h3.5v1.0h-3.5zM381.6 212.4h1.4v0.9h-1.4zM360.0 214.8h2.8v0.9h-2.8zM372.0 291.6h1.4v0.9h-1.4zM376.8 205.2h1.2v1.0h-1.2zM372.0 183.6h0.9v1.0h-0.9zM374.4 181.2h1.4v1.1h-1.4zM374.4 279.6h1.6v0.9h-1.6zM384.0 176.4h1.1v0.9h-1.1zM355.2 279.6h1.4v1.1h-1.4zM355.2 274.8h1.6v0.8h-1.6zM369.6 236.4h4.5v0.9h-4.5zM360.0 224.4h1.3v1.1h-1.3zM391.2 154.8h1.5v1.1h-1.5zM376.8 243.6h1.1v1.1h-1.1zM388.8 250.8h1.5v1.0h-1.5zM376.8 202.8h3.7v0.9h-3.7zM391.2 222.0h1.0v0.9h-1.0zM372.0 289.2h1.6v0.8h-1.6zM386.4 159.6h1.6v0.9h-1.6zM348.0 174.0h1.4v0.9h-1.4zM374.4 188.4h0.8v1.0h-0.8zM372.0 236.4h1.4v0.9h-1.4zM381.6 294.0h1.1v1.1h-1.1zM352.8 152.4h1.4v0.9h-1.4zM386.4 159.6h1.2v1.1h-1.2zM374.4 183.6h1.0v0.9h-1.0zM384.0 190.8h1.2v0.9h-1.2zM379.2 238.8h1.3v0.9h-1.3zM379.2 154.8h1.0v0.8h-1.0zM348.0 296.4h4.2v0.8h-4.2zM388.4 174.0h3.4v0.8h-3.4zM376.4 169.2h3.4v1.1h-3.4zM378.8 159.6h3.4v1.1h-3.4zM359.6 166.8h2.8v0.9h-2.8zM371.6 166.8h2.6v1.0h-2.6zM366.8 159.6h2.5v1.0h-2.5zM547.4 226.4h2.6v1.1h-2.6zM523.4 238.4h1.4v1.0h-1.4zM537.8 214.4h2.4v1.1h-2.4zM537.8 228.8h2.2v0.9h-2.2zM523.4 228.8h1.3v0.8h-1.3zM540.2 224.0h1.6v0.9h-1.6zM552.2 212.0h3.9v1.1h-3.9zM540.2 240.8h4.3v0.8h-4.3zM542.6 216.8h2.2v1.0h-2.2zM540.2 240.8h1.4v1.0h-1.4zM554.6 214.4h3.1v0.9h-3.1zM549.8 240.8h2.4v1.1h-2.4zM470.6 264.4h1.1v0.9h-1.1zM489.8 266.8h0.9v1.0h-0.9zM489.8 228.4h1.7v0.9h-1.7zM458.6 293.2h1.5v0.9h-1.5zM494.6 257.2h5.4v1.0h-5.4zM463.4 278.8h1.3v1.1h-1.3zM465.8 226.0h5.1v0.9h-5.1zM463.4 218.8h1.1v1.1h-1.1zM453.8 235.6h1.1v0.9h-1.1zM458.6 290.8h1.6v1.1h-1.6zM485.0 238.0h1.6v0.9h-1.6zM465.8 293.2h4.4v1.1h-4.4zM485.0 242.8h1.5v0.9h-1.5zM492.2 259.6h1.4v0.8h-1.4zM465.8 218.8h1.3v1.0h-1.3zM463.4 233.2h0.9v1.1h-0.9zM487.4 295.6h4.2v0.8h-4.2zM451.4 228.4h1.6v1.0h-1.6zM494.6 281.2h2.9v1.0h-2.9zM473.0 230.8h0.8v1.0h-0.8zM494.6 298.0h1.5v1.1h-1.5zM497.0 259.6h0.9v1.1h-0.9zM489.8 223.6h1.1v0.9h-1.1zM477.8 257.2h1.2v1.0h-1.2zM465.8 221.2h1.7v1.1h-1.7zM468.2 216.4h1.6v0.9h-1.6zM494.6 214.0h1.4v0.9h-1.4zM497.0 271.6h2.9v0.9h-2.9zM468.2 271.6h5.8v0.9h-5.8zM456.2 295.6h5.3v0.9h-5.3zM468.2 278.8h1.0v0.9h-1.0zM465.8 269.2h4.8v1.1h-4.8zM461.0 216.4h0.9v1.0h-0.9zM453.8 223.6h1.0v1.0h-1.0zM453.8 218.8h1.2v1.0h-1.2zM485.0 221.2h1.1v1.0h-1.1zM475.4 216.4h1.5v0.9h-1.5zM485.0 286.0h3.3v1.0h-3.3zM492.2 221.2h0.8v0.8h-0.8zM449.0 293.2h1.2v1.1h-1.2zM497.0 252.4h1.7v0.9h-1.7zM471.8 241.6h4.5v0.9h-4.5zM488.6 234.4h1.9v1.0h-1.9zM479.0 224.8h2.4v0.9h-2.4zM486.2 229.6h3.3v0.9h-3.3zM479.0 241.6h2.7v1.0h-2.7zM486.2 239.2h3.7v1.1h-3.7zM491.0 241.6h4.4v1.1h-4.4zM303.2 272.8h1.3v0.9h-1.3zM272.0 280.0h5.0v0.9h-5.0zM274.4 287.2h0.9v1.1h-0.9zM300.8 294.4h4.3v1.0h-4.3zM276.8 289.6h2.7v0.9h-2.7zM291.2 292.0h1.2v1.1h-1.2zM288.8 270.4h1.4v0.8h-1.4zM303.2 270.4h2.9v0.8h-2.9zM274.4 272.8h3.4v1.1h-3.4zM300.8 294.4h1.7v0.9h-1.7zM296.0 277.6h1.0v1.1h-1.0zM267.2 294.4h1.0v0.9h-1.0zM296.0 275.2h1.1v0.9h-1.1zM293.6 292.0h1.4v1.1h-1.4zM267.2 284.8h1.5v1.1h-1.5zM315.6 322.4h5.2v1.0h-5.2zM303.6 315.2h2.8v0.9h-2.8zM270.0 322.4h1.6v1.1h-1.6zM318.0 320.0h1.0v0.9h-1.0zM325.2 324.8h1.7v1.0h-1.7zM270.0 324.8h0.9v0.8h-0.9zM298.8 312.8h1.4v0.8h-1.4zM306.0 317.6h3.7v1.0h-3.7zM282.0 324.8h1.6v1.1h-1.6zM265.2 320.0h1.0v0.8h-1.0zM322.8 324.8h4.7v1.0h-4.7zM294.0 320.0h1.1v1.1h-1.1zM262.8 320.0h0.9v0.9h-0.9zM289.2 315.2h1.5v0.9h-1.5z"/>
<path fill="#b9c4e6" opacity=".62" d="M357.6 212.4h4.5v1.0h-4.5zM374.4 279.6h1.2v1.0h-1.2zM364.8 178.8h1.1v0.8h-1.1zM355.2 166.8h1.5v0.8h-1.5zM360.0 157.2h3.4v0.8h-3.4zM384.0 181.2h4.9v0.9h-4.9zM352.8 255.6h4.2v1.0h-4.2zM367.2 294.0h1.6v1.1h-1.6zM364.8 260.4h4.6v0.8h-4.6zM357.6 217.2h2.6v0.8h-2.6zM362.4 181.2h3.1v0.9h-3.1zM348.0 217.2h4.8v0.9h-4.8zM352.8 150.0h1.2v1.0h-1.2zM355.2 236.4h1.1v0.9h-1.1zM357.6 238.8h5.1v1.1h-5.1zM355.2 229.2h1.4v0.9h-1.4zM355.2 260.4h5.2v0.9h-5.2zM372.0 174.0h1.6v1.1h-1.6zM379.2 282.0h0.8v1.1h-0.8zM489.8 281.2h2.9v1.1h-2.9zM473.0 298.0h4.3v0.8h-4.3zM492.2 269.2h1.4v1.1h-1.4zM451.4 240.4h1.7v0.9h-1.7zM477.8 262.0h1.2v1.0h-1.2zM482.6 238.0h1.3v1.1h-1.3zM449.0 266.8h4.1v1.0h-4.1zM473.0 250.0h1.4v1.0h-1.4zM468.2 238.0h1.5v1.0h-1.5zM458.6 274.0h1.0v1.0h-1.0zM451.4 230.8h1.6v1.0h-1.6zM461.0 245.2h1.4v0.9h-1.4zM453.8 223.6h1.5v1.1h-1.5zM489.8 226.0h1.0v0.9h-1.0zM451.4 276.4h1.2v1.0h-1.2zM494.6 264.4h1.0v0.9h-1.0zM458.6 281.2h5.3v1.1h-5.3zM451.4 218.8h2.9v1.0h-2.9zM482.6 238.0h1.0v0.9h-1.0zM465.8 257.2h1.0v0.9h-1.0zM492.2 230.8h1.0v1.0h-1.0zM465.8 271.6h5.4v0.8h-5.4zM272.0 270.4h1.0v0.8h-1.0zM281.6 275.2h2.8v1.0h-2.8zM303.2 296.8h1.2v0.9h-1.2zM298.4 294.4h1.6v1.0h-1.6zM260.4 322.4h1.7v1.0h-1.7zM310.8 310.4h1.3v1.0h-1.3zM282.0 322.4h1.0v1.1h-1.0zM291.6 312.8h1.0v1.0h-1.0zM267.6 312.8h1.6v1.0h-1.6zM260.4 315.2h1.5v1.1h-1.5z"/>
<path fill="#c9b0d0" opacity=".62" d="M376.8 226.8h1.1v1.0h-1.1zM384.0 226.8h1.6v1.1h-1.6zM369.6 178.8h1.4v0.9h-1.4zM391.2 243.6h1.2v0.9h-1.2zM355.2 188.4h1.6v0.9h-1.6zM367.2 207.6h1.6v1.1h-1.6zM367.2 241.2h0.8v1.1h-0.8zM369.6 291.6h1.2v0.9h-1.2zM355.2 255.6h1.0v0.8h-1.0zM364.8 291.6h1.7v0.9h-1.7zM350.4 195.6h0.9v0.9h-0.9zM376.8 253.2h1.6v1.0h-1.6zM350.4 174.0h1.1v0.8h-1.1zM362.4 243.6h1.6v1.1h-1.6zM357.6 195.6h1.4v0.9h-1.4zM364.8 174.0h0.8v1.1h-0.8zM355.2 231.6h1.6v1.0h-1.6zM384.0 193.2h1.4v1.1h-1.4zM350.4 253.2h1.2v0.8h-1.2zM350.4 214.8h5.4v1.1h-5.4zM374.4 270.0h1.4v0.9h-1.4zM386.4 154.8h1.4v0.8h-1.4zM364.8 166.8h1.6v0.8h-1.6zM386.4 188.4h1.3v1.0h-1.3zM350.4 210.0h1.2v1.0h-1.2zM379.2 262.8h1.7v0.8h-1.7zM384.0 207.6h1.7v1.1h-1.7zM355.2 265.2h1.0v0.8h-1.0zM372.0 270.0h1.6v0.9h-1.6zM348.0 200.4h1.3v1.1h-1.3zM362.4 174.0h1.1v1.1h-1.1zM350.4 212.4h1.4v1.0h-1.4zM369.6 231.6h1.6v0.9h-1.6zM362.4 284.4h4.8v0.9h-4.8zM360.0 154.8h5.7v0.9h-5.7zM379.2 164.4h3.7v1.1h-3.7z"/>
<path fill="#e6bd5a" opacity=".62" d="M350.4 152.4h1.1v0.9h-1.1zM362.4 284.4h1.1v1.1h-1.1zM367.2 274.8h0.9v1.1h-0.9zM364.8 284.4h1.6v0.8h-1.6zM355.2 267.6h1.5v0.9h-1.5zM381.6 200.4h1.4v0.8h-1.4zM350.4 176.4h1.4v1.0h-1.4zM374.4 162.0h1.6v0.8h-1.6zM355.2 171.6h0.9v0.9h-0.9zM391.2 183.6h3.0v0.8h-3.0zM386.4 202.8h5.5v1.1h-5.5zM458.6 240.4h1.0v1.0h-1.0zM497.0 276.4h1.6v1.1h-1.6zM487.4 283.6h1.5v0.9h-1.5zM494.6 271.6h0.9v0.9h-0.9zM492.2 223.6h1.3v0.9h-1.3zM465.8 223.6h2.5v1.0h-2.5zM298.4 289.6h1.5v0.9h-1.5zM526.8 274.0h1.5v0.8h-1.5zM526.8 288.4h1.2v1.1h-1.2zM565.2 274.0h1.5v0.9h-1.5zM572.4 269.2h1.3v1.1h-1.3zM546.0 283.6h1.0v1.0h-1.0zM548.4 264.4h1.1v1.1h-1.1zM555.6 274.0h3.2v0.9h-3.2zM574.8 278.8h3.1v0.8h-3.1zM560.4 276.4h1.6v0.8h-1.6zM529.2 269.2h1.0v1.1h-1.0zM555.6 298.0h2.6v1.0h-2.6zM555.6 266.8h1.0v1.0h-1.0zM541.2 288.4h1.3v0.8h-1.3zM538.8 276.4h1.6v1.1h-1.6zM434.4 236.8h1.2v0.9h-1.2zM432.0 188.8h4.2v0.8h-4.2zM439.2 280.0h1.2v1.1h-1.2zM422.4 152.8h1.2v0.9h-1.2zM441.6 294.4h1.3v0.9h-1.3zM427.2 179.2h3.5v1.0h-3.5zM420.0 222.4h1.2v1.0h-1.2zM436.8 126.4h1.0v0.8h-1.0zM422.4 246.4h1.5v0.8h-1.5zM434.4 172.0h1.1v1.1h-1.1zM420.0 280.0h3.0v1.0h-3.0zM427.2 126.4h1.2v1.1h-1.2zM417.6 268.0h0.9v0.9h-0.9zM420.0 258.4h1.4v1.0h-1.4zM422.4 152.8h0.9v1.0h-0.9zM412.8 232.0h1.3v0.8h-1.3zM436.8 205.6h4.9v1.0h-4.9zM429.6 294.4h1.4v0.8h-1.4zM422.4 248.8h1.7v0.8h-1.7zM427.2 188.8h1.2v1.1h-1.2zM424.8 251.2h1.2v0.9h-1.2zM424.8 188.8h1.2v1.1h-1.2zM415.2 150.4h1.6v0.9h-1.6zM429.6 179.2h1.1v1.0h-1.1zM427.2 145.6h1.1v0.9h-1.1zM429.6 188.8h1.5v0.9h-1.5zM424.8 160.0h3.8v1.0h-3.8zM441.6 188.8h1.4v0.9h-1.4zM424.8 157.6h1.4v0.9h-1.4zM436.8 236.8h5.8v1.1h-5.8zM410.4 232.0h0.9v0.9h-0.9zM436.8 203.2h1.7v1.1h-1.7zM439.2 186.4h1.1v1.0h-1.1zM422.4 215.2h1.6v1.0h-1.6zM429.6 234.4h1.5v1.1h-1.5zM422.4 150.4h4.2v1.0h-4.2zM420.0 251.2h1.3v0.9h-1.3zM436.8 208.0h1.2v0.9h-1.2zM422.4 256.0h4.1v1.1h-4.1zM441.6 280.0h1.3v0.8h-1.3zM424.8 126.4h2.8v0.9h-2.8zM429.6 275.2h0.9v1.0h-0.9zM429.6 176.8h5.3v1.0h-5.3zM422.4 280.0h1.7v1.1h-1.7zM417.6 232.0h1.2v0.8h-1.2zM330.2 215.6h1.4v1.1h-1.4zM335.0 242.0h1.6v0.8h-1.6zM363.8 227.6h5.0v1.0h-5.0zM337.4 227.6h1.7v1.1h-1.7zM359.0 218.0h1.2v1.1h-1.2zM315.8 246.8h1.2v1.1h-1.2zM311.0 242.0h4.4v0.9h-4.4zM337.4 244.4h1.5v1.0h-1.5zM359.0 268.4h1.6v1.1h-1.6zM347.0 280.4h1.1v1.0h-1.1zM313.4 237.2h0.9v1.0h-0.9zM356.6 258.8h1.0v0.8h-1.0zM356.6 287.6h1.4v0.8h-1.4zM337.4 280.4h0.9v1.1h-0.9zM323.0 237.2h1.6v1.0h-1.6zM325.4 230.0h1.3v0.9h-1.3zM327.8 254.0h1.2v1.1h-1.2zM330.2 282.8h1.5v0.9h-1.5zM330.2 215.6h1.3v1.0h-1.3zM339.8 244.4h1.1v1.0h-1.1zM363.8 258.8h3.7v1.1h-3.7zM354.2 234.8h1.3v0.9h-1.3zM313.4 251.6h1.5v0.9h-1.5zM335.0 227.6h1.0v1.0h-1.0zM315.8 237.2h4.1v1.1h-4.1zM332.6 297.2h4.4v0.9h-4.4zM351.8 234.8h1.5v1.1h-1.5zM327.8 237.2h1.1v1.0h-1.1zM320.6 273.2h2.8v0.9h-2.8zM349.4 258.8h1.7v0.8h-1.7zM327.8 234.8h1.2v0.8h-1.2zM356.6 234.8h1.6v0.9h-1.6zM318.2 239.6h1.0v1.0h-1.0zM359.0 261.2h1.6v0.8h-1.6zM349.4 210.8h4.3v0.9h-4.3zM363.8 287.6h1.3v0.8h-1.3zM327.8 256.4h5.5v1.0h-5.5zM351.8 225.2h1.6v1.0h-1.6zM327.8 273.2h1.3v1.1h-1.3zM363.8 213.2h1.4v1.0h-1.4zM342.2 239.6h0.8v1.1h-0.8zM349.4 249.2h0.9v0.8h-0.9zM327.8 261.2h1.2v1.0h-1.2zM330.2 208.4h3.6v1.0h-3.6zM359.0 254.0h1.3v1.1h-1.3zM315.8 230.0h1.5v0.9h-1.5zM325.4 232.4h1.1v1.1h-1.1zM351.8 237.2h1.7v1.1h-1.7zM195.6 259.6h1.5v1.1h-1.5zM222.0 240.4h0.9v0.9h-0.9zM186.0 264.4h1.6v1.0h-1.6zM229.2 288.4h0.9v0.8h-0.9zM164.4 254.8h1.3v1.0h-1.3zM205.2 266.8h0.8v1.0h-0.8zM193.2 274.0h1.6v1.1h-1.6zM190.8 257.2h1.7v1.1h-1.7zM248.4 290.8h4.0v1.1h-4.0zM171.6 293.2h1.4v0.9h-1.4zM246.0 269.2h1.3v1.1h-1.3zM214.8 298.0h0.9v0.8h-0.9zM222.0 238.0h0.8v0.8h-0.8zM210.0 276.4h1.6v1.1h-1.6zM212.4 262.0h0.9v1.0h-0.9zM246.0 247.6h3.6v1.0h-3.6zM222.0 245.2h3.4v0.9h-3.4zM181.2 238.0h1.0v0.9h-1.0zM195.6 257.2h1.6v1.0h-1.6zM241.2 293.2h3.7v0.9h-3.7zM214.8 278.8h5.3v0.9h-5.3zM210.0 240.4h1.3v0.8h-1.3zM253.2 286.0h1.4v1.1h-1.4zM202.8 259.6h1.2v0.9h-1.2zM171.6 266.8h1.0v0.9h-1.0zM162.0 245.2h1.1v0.9h-1.1zM236.4 257.2h1.7v1.0h-1.7zM250.8 245.2h4.0v1.1h-4.0zM226.8 286.0h1.6v1.1h-1.6zM246.0 298.0h1.1v0.9h-1.1zM229.2 293.2h1.3v1.1h-1.3zM188.4 298.0h5.1v0.9h-5.1zM174.0 245.2h1.0v1.1h-1.0zM250.8 290.8h1.5v1.0h-1.5zM253.2 274.0h4.6v1.0h-4.6zM241.2 238.0h1.7v0.9h-1.7zM181.2 276.4h0.9v1.1h-0.9zM207.6 259.6h1.6v1.1h-1.6zM224.4 274.0h1.0v0.8h-1.0zM231.6 242.8h1.4v1.0h-1.4zM243.6 283.6h1.6v1.1h-1.6zM198.0 271.6h6.0v1.1h-6.0zM217.2 283.6h1.6v1.1h-1.6zM210.0 269.2h1.0v0.9h-1.0zM186.0 293.2h1.6v0.8h-1.6zM222.0 242.8h1.6v1.0h-1.6zM253.2 240.4h5.8v0.9h-5.8zM234.0 264.4h5.6v0.8h-5.6zM222.0 247.6h1.2v1.0h-1.2zM238.8 240.4h1.7v1.0h-1.7zM186.0 288.4h1.4v0.9h-1.4zM190.8 286.0h2.8v1.0h-2.8zM200.4 269.2h1.6v0.9h-1.6zM212.4 250.0h4.5v0.8h-4.5zM238.8 266.8h4.5v0.9h-4.5zM171.6 288.4h1.6v0.8h-1.6zM205.2 290.8h1.1v1.1h-1.1zM248.4 250.0h5.1v0.8h-5.1zM174.0 259.6h1.2v1.1h-1.2zM212.4 269.2h1.1v0.9h-1.1zM226.8 274.0h1.1v0.8h-1.1zM186.0 271.6h1.6v0.8h-1.6zM214.8 278.8h1.2v0.9h-1.2zM205.2 242.8h5.3v1.1h-5.3zM212.4 278.8h0.8v0.8h-0.8zM183.6 266.8h0.8v0.8h-0.8zM203.8 318.6h0.9v1.1h-0.9zM206.2 311.4h3.4v1.0h-3.4zM230.2 313.8h2.9v0.8h-2.9zM237.4 337.8h1.5v1.0h-1.5zM206.2 335.4h0.8v0.9h-0.8zM244.6 333.0h0.9v0.9h-0.9zM227.8 330.6h1.2v1.1h-1.2zM220.6 316.2h1.3v1.1h-1.3zM199.0 321.0h1.0v0.9h-1.0zM203.8 330.6h1.7v1.0h-1.7zM220.6 311.4h1.0v1.1h-1.0zM206.2 340.2h0.9v1.1h-0.9zM239.8 333.0h4.1v0.9h-4.1zM237.4 321.0h1.7v1.0h-1.7zM225.4 316.2h1.4v1.0h-1.4zM208.6 316.2h1.0v1.0h-1.0zM213.4 309.0h3.5v1.0h-3.5zM220.6 309.0h1.4v0.8h-1.4zM247.0 335.4h1.3v1.1h-1.3zM232.6 328.2h1.2v0.9h-1.2zM225.4 309.0h1.0v1.1h-1.0zM270.0 317.6h1.0v1.1h-1.0zM291.6 315.2h1.6v1.0h-1.6zM270.0 315.2h0.9v1.1h-0.9z"/>
<path fill="#4fc3d9" opacity=".62" d="M367.2 169.2h1.0v1.0h-1.0zM364.8 186.0h1.0v0.8h-1.0zM360.0 154.8h1.4v0.9h-1.4zM360.0 214.8h5.4v1.1h-5.4zM388.8 253.2h1.5v1.0h-1.5zM381.6 157.2h1.5v1.0h-1.5zM381.6 174.0h1.3v1.1h-1.3zM360.0 178.8h3.6v1.0h-3.6zM362.4 214.8h1.5v0.9h-1.5zM362.4 260.4h1.2v0.9h-1.2zM391.2 157.2h1.5v0.8h-1.5zM381.6 188.4h1.5v0.9h-1.5zM391.2 224.4h1.1v1.0h-1.1zM357.6 262.8h1.1v0.9h-1.1zM367.2 176.4h0.9v1.0h-0.9zM374.0 176.4h3.6v0.9h-3.6zM359.6 166.8h4.7v1.1h-4.7zM371.6 164.4h2.0v1.0h-2.0zM383.6 152.4h3.7v1.1h-3.7zM371.6 162.0h2.9v1.0h-2.9zM357.2 166.8h2.1v0.9h-2.1zM547.4 240.8h5.4v0.8h-5.4zM549.8 243.2h2.1v0.8h-2.1zM554.6 221.6h2.1v1.1h-2.1zM547.4 243.2h4.4v0.9h-4.4zM552.2 231.2h2.1v0.9h-2.1zM540.2 224.0h3.4v1.0h-3.4zM545.0 236.0h1.8v0.9h-1.8zM552.2 219.2h1.5v1.1h-1.5zM535.4 236.0h3.7v0.9h-3.7zM523.4 238.4h3.5v0.9h-3.5zM533.0 236.0h4.1v1.1h-4.1zM535.4 236.0h5.7v1.1h-5.7zM552.2 231.2h2.2v1.0h-2.2zM523.4 216.8h3.7v0.9h-3.7zM542.6 214.4h2.5v1.1h-2.5zM528.2 240.8h1.4v0.8h-1.4zM537.8 216.8h4.2v1.0h-4.2zM525.8 228.8h2.7v0.9h-2.7zM528.2 226.4h1.6v1.1h-1.6zM537.8 245.6h3.8v1.1h-3.8zM540.2 236.0h3.4v0.8h-3.4zM535.4 231.2h4.5v0.9h-4.5zM535.4 214.4h3.3v0.9h-3.3zM533.0 216.8h1.8v1.1h-1.8zM547.4 236.0h3.0v1.1h-3.0zM554.6 240.8h3.5v0.9h-3.5zM491.0 222.4h2.1v1.0h-2.1zM493.4 229.6h2.6v0.9h-2.6zM476.6 236.8h4.1v1.0h-4.1zM481.4 239.2h3.2v1.0h-3.2zM467.0 220.0h2.9v0.8h-2.9zM462.2 232.0h3.8v1.1h-3.8zM462.2 239.2h2.4v1.0h-2.4z"/>
<path fill="#7fd6e6" opacity=".62" d="M354.8 159.6h4.7v0.9h-4.7zM352.4 164.4h3.4v0.8h-3.4zM386.0 171.6h2.6v1.1h-2.6zM364.4 162.0h2.0v0.8h-2.0zM371.6 157.2h2.7v0.8h-2.7zM547.4 224.0h2.8v0.9h-2.8zM554.6 238.4h3.1v0.8h-3.1zM521.0 233.6h2.5v0.9h-2.5zM537.8 245.6h2.6v1.1h-2.6zM542.6 238.4h1.3v1.0h-1.3zM540.2 231.2h1.3v1.1h-1.3zM547.4 233.6h3.8v1.1h-3.8zM552.2 214.4h3.6v1.0h-3.6zM554.6 240.8h2.6v1.1h-2.6zM523.4 238.4h1.7v1.0h-1.7zM535.4 221.6h3.7v1.0h-3.7zM479.0 227.2h3.5v0.8h-3.5zM493.4 224.8h4.9v0.9h-4.9zM410.0 262.0h1.2v1.6h-1.2zM411.8 262.0h1.2v1.6h-1.2zM413.6 262.0h1.2v1.6h-1.2zM415.4 262.0h1.2v1.6h-1.2zM417.2 262.0h1.2v1.6h-1.2zM419.0 262.0h1.2v1.6h-1.2zM420.8 262.0h1.2v1.6h-1.2zM422.6 262.0h1.2v1.6h-1.2zM424.4 262.0h1.2v1.6h-1.2zM426.2 262.0h1.2v1.6h-1.2z"/>
<path fill="#6a73a0" opacity=".62" d="M357.2 152.4h4.2v0.8h-4.2zM350.0 171.6h3.3v1.1h-3.3zM371.6 164.4h5.4v1.0h-5.4zM376.4 174.0h3.8v1.1h-3.8zM366.8 164.4h4.9v0.9h-4.9zM362.0 157.2h1.8v1.1h-1.8zM357.2 162.0h3.7v0.8h-3.7zM540.2 219.2h2.8v1.0h-2.8zM549.8 216.8h3.9v0.8h-3.9zM525.8 219.2h2.1v1.1h-2.1zM547.4 228.8h1.2v0.9h-1.2zM547.4 216.8h3.8v1.1h-3.8zM549.8 224.0h2.7v0.8h-2.7zM535.4 240.8h3.1v1.1h-3.1zM468.2 221.2h1.6v1.0h-1.6zM470.6 269.2h0.9v0.8h-0.9zM492.2 264.4h1.2v1.1h-1.2zM453.8 259.6h1.3v1.1h-1.3zM465.8 269.2h1.1v1.0h-1.1zM475.4 252.4h1.6v1.1h-1.6zM480.2 281.2h1.1v1.0h-1.1zM463.4 226.0h1.2v1.0h-1.2zM480.2 235.6h0.8v1.0h-0.8zM482.6 250.0h0.9v1.0h-0.9zM497.0 266.8h1.5v1.1h-1.5zM477.8 247.6h1.0v1.1h-1.0zM489.8 226.0h1.5v1.1h-1.5zM492.2 276.4h1.4v0.8h-1.4zM482.6 274.0h4.6v1.1h-4.6zM487.4 245.2h0.9v0.9h-0.9zM487.4 216.4h0.9v1.0h-0.9zM465.8 242.8h1.0v0.9h-1.0zM489.8 281.2h0.8v0.8h-0.8zM468.2 257.2h1.0v1.1h-1.0zM470.6 271.6h1.2v0.9h-1.2zM449.0 283.6h5.6v1.0h-5.6zM451.4 240.4h1.6v1.0h-1.6zM458.6 235.6h4.6v0.8h-4.6zM458.6 252.4h1.4v1.0h-1.4zM485.0 233.2h1.4v0.8h-1.4zM468.2 281.2h1.4v0.8h-1.4zM453.8 295.6h3.3v1.1h-3.3zM458.6 271.6h1.4v0.9h-1.4zM456.2 216.4h0.9v1.0h-0.9zM494.6 214.0h1.3v1.0h-1.3zM480.2 264.4h4.4v0.9h-4.4zM468.2 214.0h0.8v1.1h-0.8zM470.6 223.6h1.0v0.8h-1.0zM477.8 295.6h2.9v1.0h-2.9zM494.6 276.4h1.6v1.1h-1.6zM451.4 271.6h1.2v0.9h-1.2zM494.6 252.4h1.0v0.9h-1.0zM487.4 278.8h1.5v0.8h-1.5zM489.8 240.4h1.1v1.1h-1.1zM456.2 259.6h1.3v0.9h-1.3zM470.6 271.6h1.5v0.9h-1.5zM461.0 216.4h1.0v1.1h-1.0zM480.2 264.4h1.3v0.9h-1.3zM489.8 216.4h1.0v1.1h-1.0zM480.2 264.4h2.8v1.1h-2.8zM468.2 269.2h2.6v1.1h-2.6zM451.4 233.2h1.3v1.1h-1.3zM473.0 264.4h0.9v1.1h-0.9zM458.6 276.4h1.6v1.0h-1.6zM473.0 298.0h1.0v0.9h-1.0zM464.6 222.4h4.3v1.0h-4.3zM467.0 241.6h3.0v1.1h-3.0zM479.0 239.2h2.8v1.1h-2.8zM481.4 224.8h4.2v1.0h-4.2zM269.6 275.2h2.9v1.1h-2.9zM291.2 275.2h1.5v1.0h-1.5zM269.6 296.8h4.9v0.9h-4.9zM291.2 275.2h4.6v0.9h-4.6zM291.2 292.0h4.8v1.0h-4.8zM267.2 272.8h0.9v0.9h-0.9zM272.0 287.2h1.4v0.9h-1.4zM293.6 270.4h4.3v0.9h-4.3zM281.6 275.2h1.0v1.0h-1.0zM262.4 292.0h3.9v0.8h-3.9zM267.2 284.8h5.2v0.9h-5.2zM281.6 289.6h5.9v0.8h-5.9zM269.6 280.0h1.6v0.8h-1.6zM293.6 287.2h1.7v1.1h-1.7zM264.8 275.2h1.2v1.1h-1.2zM293.6 275.2h1.5v1.1h-1.5zM313.2 308.0h1.1v1.0h-1.1zM296.4 310.4h1.2v1.1h-1.2zM301.2 320.0h0.9v0.8h-0.9zM291.6 315.2h0.9v0.8h-0.9zM265.2 320.0h1.7v0.8h-1.7zM303.6 324.8h1.3v1.1h-1.3zM282.0 310.4h0.9v1.1h-0.9zM303.6 324.8h1.5v0.9h-1.5zM274.8 322.4h1.5v1.0h-1.5z"/>
<path fill="#5d6386" opacity=".62" d="M558.0 264.4h1.3v0.9h-1.3zM565.2 290.8h1.0v0.9h-1.0zM562.8 274.0h4.6v1.1h-4.6zM541.2 276.4h5.7v0.8h-5.7zM558.0 266.8h1.7v1.1h-1.7zM574.8 281.2h4.7v1.1h-4.7zM536.4 293.2h0.8v1.0h-0.8zM526.8 264.4h4.1v1.0h-4.1zM577.2 274.0h3.1v0.9h-3.1zM529.2 276.4h1.5v1.0h-1.5zM543.6 276.4h1.3v0.9h-1.3zM531.6 288.4h5.6v1.1h-5.6zM574.8 274.0h1.2v0.9h-1.2zM534.0 298.0h3.1v0.9h-3.1zM541.2 276.4h1.6v1.0h-1.6zM550.8 262.0h1.2v1.0h-1.2zM562.8 276.4h1.7v1.0h-1.7zM555.6 266.8h1.2v1.1h-1.2zM536.4 266.8h1.2v0.9h-1.2zM422.4 224.8h1.5v1.1h-1.5zM432.0 133.6h1.3v0.8h-1.3zM434.4 184.0h5.4v0.8h-5.4zM436.8 167.2h1.0v1.0h-1.0zM410.4 282.4h1.4v0.9h-1.4zM424.8 268.0h4.9v1.0h-4.9zM444.0 167.2h4.4v0.9h-4.4zM427.2 145.6h1.4v1.1h-1.4zM441.6 169.6h1.3v1.1h-1.3zM432.0 140.8h0.8v0.9h-0.8zM410.4 217.6h4.3v1.0h-4.3zM410.4 251.2h5.6v1.1h-5.6zM444.0 179.2h1.5v1.0h-1.5zM444.0 236.8h4.3v1.0h-4.3zM436.8 246.4h1.3v1.1h-1.3zM420.0 128.8h1.3v1.1h-1.3zM417.6 160.0h1.6v1.0h-1.6zM441.6 143.2h1.0v0.9h-1.0zM436.8 208.0h0.8v0.9h-0.8zM429.6 260.8h1.3v1.1h-1.3zM408.0 162.4h1.4v1.0h-1.4zM427.2 232.0h1.3v1.0h-1.3zM434.4 169.6h1.0v1.0h-1.0zM439.2 160.0h3.7v0.8h-3.7zM441.6 282.4h1.7v1.1h-1.7zM417.6 284.8h1.5v0.8h-1.5zM424.8 124.0h1.0v1.0h-1.0zM436.8 241.6h1.2v1.1h-1.2zM424.8 212.8h0.8v0.9h-0.8zM412.8 270.4h0.8v0.8h-0.8zM429.6 234.4h3.6v1.0h-3.6zM424.8 164.8h1.1v1.1h-1.1zM427.2 148.0h1.2v0.9h-1.2zM441.6 169.6h1.4v1.1h-1.4zM441.6 292.0h1.7v1.1h-1.7zM359.0 218.0h0.8v1.1h-0.8zM349.4 256.4h0.9v0.9h-0.9zM342.2 292.4h1.3v1.1h-1.3zM347.0 292.4h1.2v1.1h-1.2zM363.8 246.8h5.9v0.9h-5.9zM332.6 285.2h1.3v0.9h-1.3zM356.6 270.8h1.6v1.0h-1.6zM318.2 261.2h1.7v0.8h-1.7zM327.8 256.4h1.3v1.0h-1.3zM311.0 234.8h0.9v0.8h-0.9zM320.6 258.8h3.4v1.0h-3.4zM361.4 220.4h1.2v1.1h-1.2zM342.2 218.0h5.4v1.1h-5.4zM323.0 292.4h5.5v1.1h-5.5zM315.8 278.0h1.4v1.1h-1.4zM327.8 282.8h1.1v1.0h-1.1zM325.4 268.4h1.2v0.8h-1.2zM330.2 227.6h1.4v1.0h-1.4zM332.6 292.4h1.2v1.1h-1.2zM359.0 244.4h0.8v1.1h-0.8zM359.0 227.6h1.2v1.0h-1.2zM349.4 237.2h1.3v0.9h-1.3zM342.2 222.8h1.4v1.0h-1.4zM337.4 208.4h1.0v0.8h-1.0zM339.8 230.0h1.6v1.1h-1.6zM335.0 297.2h5.0v1.1h-5.0zM344.6 208.4h1.2v1.1h-1.2zM325.4 208.4h3.0v1.1h-3.0zM318.2 244.4h0.8v0.8h-0.8zM363.8 215.6h1.6v0.8h-1.6zM347.0 258.8h1.3v1.1h-1.3zM361.4 251.6h1.4v1.1h-1.4zM320.6 237.2h1.5v0.8h-1.5zM339.8 258.8h1.4v1.0h-1.4zM323.0 280.4h4.6v1.1h-4.6zM332.6 278.0h1.2v0.9h-1.2zM320.6 280.4h1.4v0.9h-1.4zM325.4 213.2h0.8v0.9h-0.8zM320.6 246.8h4.7v1.0h-4.7zM337.4 222.8h3.3v1.0h-3.3zM318.2 232.4h4.9v1.1h-4.9zM315.8 237.2h1.6v1.1h-1.6zM224.4 262.0h1.5v0.9h-1.5zM186.0 290.8h3.2v1.1h-3.2zM212.4 242.8h4.9v1.0h-4.9zM236.4 278.8h3.3v1.1h-3.3zM176.4 269.2h0.9v1.1h-0.9zM248.4 238.0h1.4v1.1h-1.4zM200.4 298.0h1.7v0.9h-1.7zM178.8 290.8h1.6v1.0h-1.6zM169.2 298.0h1.2v1.1h-1.2zM174.0 252.4h1.6v0.9h-1.6zM181.2 264.4h1.1v1.0h-1.1zM202.8 276.4h1.0v1.1h-1.0zM183.6 257.2h3.5v1.0h-3.5zM236.4 245.2h1.2v0.9h-1.2zM202.8 298.0h1.6v1.0h-1.6zM174.0 240.4h1.4v0.9h-1.4zM169.2 298.0h4.0v0.8h-4.0zM229.2 286.0h2.5v0.8h-2.5zM190.8 238.0h1.2v1.1h-1.2zM214.8 298.0h1.6v0.8h-1.6zM200.4 245.2h1.2v1.0h-1.2zM195.6 238.0h2.9v0.9h-2.9zM162.0 252.4h1.2v1.1h-1.2zM241.2 288.4h1.1v0.9h-1.1zM169.2 259.6h3.3v1.0h-3.3zM195.6 254.8h1.0v1.0h-1.0zM171.6 254.8h1.5v1.0h-1.5zM246.0 252.4h2.8v0.8h-2.8zM241.2 245.2h1.6v1.0h-1.6zM212.4 259.6h1.3v1.0h-1.3zM219.6 271.6h1.3v1.0h-1.3zM241.2 276.4h0.9v1.1h-0.9zM193.2 247.6h2.7v1.0h-2.7zM248.4 276.4h0.9v0.9h-0.9zM169.2 254.8h1.0v0.9h-1.0zM169.2 266.8h5.0v1.0h-5.0zM222.0 247.6h1.1v1.0h-1.1zM207.6 271.6h0.9v1.0h-0.9zM248.4 293.2h1.0v0.8h-1.0zM176.4 283.6h1.5v1.1h-1.5zM226.8 271.6h1.5v1.0h-1.5zM224.4 269.2h1.7v1.1h-1.7zM188.4 250.0h1.6v1.0h-1.6zM210.0 238.0h1.2v0.8h-1.2zM217.2 254.8h1.7v0.9h-1.7zM236.4 278.8h1.5v0.9h-1.5zM171.6 271.6h5.1v1.1h-5.1zM202.8 257.2h1.2v0.9h-1.2zM181.2 247.6h3.5v1.0h-3.5zM178.8 257.2h1.2v1.0h-1.2zM229.2 276.4h3.1v1.0h-3.1zM212.4 283.6h1.0v0.9h-1.0zM190.8 288.4h1.1v0.8h-1.1zM207.6 295.6h1.0v1.1h-1.0zM217.2 257.2h1.3v0.8h-1.3zM181.2 252.4h1.1v1.1h-1.1zM169.2 288.4h1.1v1.1h-1.1zM241.2 242.8h1.0v1.0h-1.0zM205.2 293.2h1.7v1.0h-1.7zM186.0 288.4h1.4v1.0h-1.4zM241.2 252.4h1.1v1.1h-1.1zM236.4 252.4h5.0v0.9h-5.0zM210.0 242.8h1.5v1.0h-1.5zM225.4 335.4h4.2v0.9h-4.2zM194.2 321.0h1.6v1.1h-1.6zM211.0 337.8h5.3v0.9h-5.3zM208.6 309.0h1.5v0.9h-1.5zM247.0 333.0h3.3v0.8h-3.3zM187.0 335.4h1.1v1.0h-1.1zM203.8 325.8h1.4v0.8h-1.4zM247.0 328.2h1.2v0.8h-1.2zM218.2 321.0h2.8v1.0h-2.8zM51.6 314.2h1.4v0.9h-1.4zM82.8 342.8h1.0v0.9h-1.0zM12.6 335.0h0.9v1.0h-0.9zM77.6 327.2h1.4v1.1h-1.4zM98.4 314.2h1.2v1.1h-1.2zM72.4 329.8h2.6v0.8h-2.6zM147.8 337.6h0.9v1.1h-0.9zM72.4 329.8h1.7v1.1h-1.7zM67.2 337.6h1.7v1.0h-1.7zM12.6 335.0h1.4v1.0h-1.4zM23.0 366.2h1.2v1.1h-1.2zM119.2 335.0h1.1v1.1h-1.1zM111.4 358.4h5.5v1.1h-5.5zM75.0 376.6h1.7v0.9h-1.7zM119.2 335.0h1.3v0.9h-1.3zM106.2 335.0h1.2v1.1h-1.2zM49.0 309.0h1.3v1.1h-1.3zM17.8 376.6h1.3v0.9h-1.3zM59.4 361.0h5.4v1.0h-5.4zM90.6 355.8h5.9v1.0h-5.9zM67.2 371.4h4.7v0.9h-4.7zM51.6 335.0h1.1v0.9h-1.1zM15.2 348.0h4.8v0.8h-4.8zM132.2 371.4h1.4v1.0h-1.4zM46.4 327.2h0.8v1.1h-0.8zM114.0 361.0h3.7v0.9h-3.7zM101.0 311.6h2.8v0.8h-2.8zM85.4 316.8h1.2v1.1h-1.2zM54.2 311.6h1.4v1.1h-1.4zM124.4 353.2h0.9v1.0h-0.9zM23.0 322.0h1.1v0.9h-1.1zM90.6 374.0h1.5v0.8h-1.5zM124.4 366.2h1.2v1.1h-1.2zM38.6 361.0h0.9v1.1h-0.9zM101.0 376.6h1.2v1.1h-1.2zM140.0 316.8h4.7v1.0h-4.7zM10.0 316.8h1.2v1.0h-1.2zM17.8 314.2h3.6v0.8h-3.6zM54.2 345.4h1.3v1.1h-1.3zM56.8 335.0h1.5v0.9h-1.5zM93.2 329.8h1.4v0.9h-1.4zM116.6 358.4h1.5v0.9h-1.5zM90.6 376.6h1.5v1.0h-1.5zM64.6 363.6h3.7v0.8h-3.7zM276.8 340.2h2.6v1.1h-2.6zM227.4 337.6h1.1v1.0h-1.1zM201.4 337.6h3.7v1.0h-3.7zM191.0 332.4h1.6v1.1h-1.6zM206.6 358.4h1.6v0.8h-1.6zM289.8 327.2h1.2v0.8h-1.2zM222.2 342.8h0.9v1.0h-0.9zM175.4 335.0h1.2v1.0h-1.2zM170.2 353.2h0.9v1.1h-0.9zM308.0 358.4h1.1v0.9h-1.1zM300.2 335.0h1.0v0.9h-1.0zM305.4 335.0h1.3v1.0h-1.3zM308.0 358.4h1.3v0.8h-1.3zM295.0 353.2h1.1v1.0h-1.1zM214.4 379.2h1.4v1.0h-1.4zM224.8 376.6h1.4v1.0h-1.4zM172.8 371.4h1.3v1.1h-1.3zM167.6 350.6h1.4v0.9h-1.4zM269.0 366.2h0.8v1.1h-0.8zM185.8 345.4h1.3v0.8h-1.3zM274.2 319.4h1.3v0.8h-1.3zM315.8 361.0h1.0v0.9h-1.0zM276.8 319.4h1.1v0.9h-1.1zM276.8 348.0h1.5v1.1h-1.5zM245.6 340.2h5.8v1.1h-5.8zM292.4 324.6h1.0v1.0h-1.0zM204.0 366.2h2.6v1.0h-2.6zM279.4 348.0h1.7v0.9h-1.7zM248.2 371.4h0.9v0.9h-0.9zM300.2 345.4h1.6v0.9h-1.6zM284.6 311.6h1.3v0.9h-1.3zM227.4 361.0h1.1v0.9h-1.1zM271.6 361.0h1.0v1.1h-1.0zM232.6 374.0h3.4v1.0h-3.4zM188.4 324.6h0.8v0.9h-0.8zM292.4 366.2h3.0v1.0h-3.0zM250.8 335.0h1.0v0.9h-1.0zM170.2 374.0h1.5v1.0h-1.5zM180.6 327.2h1.1v1.1h-1.1zM191.0 363.6h4.5v0.9h-4.5zM250.8 350.6h1.6v1.1h-1.6zM183.2 368.8h1.3v1.0h-1.3zM466.6 376.6h1.6v0.9h-1.6zM448.4 337.6h1.0v1.0h-1.0zM417.2 345.4h1.6v1.0h-1.6zM474.4 376.6h1.1v1.1h-1.1zM453.6 337.6h4.4v0.9h-4.4zM414.6 342.8h0.8v0.9h-0.8zM451.0 361.0h1.2v1.0h-1.2zM443.2 355.8h1.7v1.0h-1.7zM477.0 366.2h4.0v0.9h-4.0zM430.2 311.6h1.6v1.1h-1.6zM469.2 319.4h1.0v1.1h-1.0zM440.6 374.0h1.1v1.0h-1.1zM466.6 342.8h1.4v1.0h-1.4zM427.6 368.8h1.6v0.9h-1.6zM443.2 366.2h1.0v1.0h-1.0zM412.0 327.2h1.4v1.0h-1.4zM464.0 366.2h1.5v0.8h-1.5zM474.4 340.2h4.6v0.8h-4.6zM453.6 376.6h1.2v1.0h-1.2zM430.2 329.8h1.5v1.0h-1.5zM445.8 337.6h1.4v1.1h-1.4zM443.2 324.6h1.3v0.9h-1.3zM425.0 324.6h3.9v1.0h-3.9zM443.2 322.0h1.1v1.1h-1.1zM432.8 335.0h1.2v1.0h-1.2zM445.8 342.8h1.2v0.9h-1.2zM412.0 348.0h1.1v0.9h-1.1zM430.2 316.8h0.9v0.9h-0.9zM448.4 366.2h0.9v1.1h-0.9zM466.6 332.4h3.8v1.0h-3.8zM448.4 374.0h1.6v0.9h-1.6zM471.8 309.0h0.9v1.0h-0.9zM417.2 353.2h1.0v1.1h-1.0zM440.6 371.4h1.1v0.8h-1.1zM417.2 335.0h5.5v0.9h-5.5zM471.8 324.6h1.0v0.9h-1.0zM453.6 363.6h1.7v1.0h-1.7zM451.0 327.2h1.2v1.0h-1.2zM586.2 348.0h0.9v0.9h-0.9zM617.4 314.2h3.1v1.1h-3.1zM620.0 329.8h1.3v1.0h-1.3zM555.0 319.4h1.4v0.9h-1.4zM516.0 327.2h0.9v1.0h-0.9zM534.2 316.8h0.9v1.1h-0.9zM588.8 361.0h1.7v1.1h-1.7zM552.4 353.2h5.6v1.0h-5.6zM633.0 350.6h1.6v1.0h-1.6zM495.2 311.6h1.6v0.9h-1.6zM560.2 366.2h0.9v0.9h-0.9zM607.0 327.2h4.0v0.8h-4.0zM625.2 337.6h1.6v1.1h-1.6zM578.4 345.4h1.3v0.9h-1.3zM536.8 355.8h1.6v1.1h-1.6zM495.2 374.0h1.6v0.8h-1.6zM586.2 319.4h1.6v0.9h-1.6zM495.2 363.6h5.6v1.1h-5.6zM518.6 371.4h3.2v1.1h-3.2zM534.2 337.6h3.1v0.9h-3.1zM612.2 355.8h1.5v1.0h-1.5zM490.0 332.4h1.0v0.9h-1.0zM505.6 353.2h1.4v1.0h-1.4zM612.2 366.2h3.3v0.8h-3.3zM500.4 311.6h1.1v1.0h-1.1zM565.4 340.2h1.4v1.0h-1.4zM643.4 348.0h1.2v0.9h-1.2zM565.4 337.6h1.2v1.0h-1.2zM539.4 327.2h1.1v0.9h-1.1zM508.2 363.6h1.4v0.9h-1.4zM568.0 366.2h1.3v0.9h-1.3zM633.0 327.2h1.0v0.8h-1.0zM591.4 355.8h5.7v1.0h-5.7zM591.4 337.6h0.9v1.0h-0.9zM536.8 371.4h1.6v0.9h-1.6zM565.4 371.4h1.7v1.0h-1.7zM497.8 319.4h1.4v0.9h-1.4zM497.8 342.8h1.4v0.9h-1.4zM573.2 366.2h1.7v1.0h-1.7zM544.6 314.2h1.4v0.9h-1.4zM544.6 324.6h1.1v1.0h-1.1zM526.4 327.2h1.6v0.9h-1.6zM542.0 329.8h0.8v1.1h-0.8zM596.6 329.8h1.6v0.9h-1.6zM599.2 368.8h1.6v1.1h-1.6zM625.2 340.2h1.2v0.9h-1.2zM542.0 376.6h1.4v0.9h-1.4zM701.0 353.2h1.4v1.0h-1.4zM680.2 366.2h1.2v0.8h-1.2zM714.0 353.2h1.6v1.1h-1.6zM714.0 335.0h0.9v1.0h-0.9zM693.2 366.2h1.0v0.9h-1.0zM672.4 342.8h1.1v1.0h-1.1zM701.0 309.0h1.5v1.1h-1.5zM672.4 350.6h3.2v1.0h-3.2zM672.4 371.4h1.4v1.0h-1.4zM724.4 332.4h1.3v1.1h-1.3zM716.6 348.0h1.3v0.9h-1.3zM716.6 340.2h1.4v1.1h-1.4zM740.0 314.2h0.8v1.1h-0.8zM693.2 371.4h1.2v0.9h-1.2zM737.4 374.0h1.1v0.8h-1.1zM724.4 332.4h0.8v0.9h-0.8zM667.2 374.0h1.7v1.0h-1.7zM672.4 342.8h1.3v1.0h-1.3zM742.6 358.4h1.0v0.9h-1.0zM719.2 363.6h1.4v1.0h-1.4zM708.8 350.6h1.3v1.0h-1.3zM682.8 371.4h0.9v1.0h-0.9zM711.4 345.4h1.2v0.9h-1.2z"/>
<path fill="#8e93b8" opacity=".62" d="M574.8 274.0h1.6v1.1h-1.6zM555.6 278.8h4.3v1.1h-4.3zM534.0 283.6h1.5v1.0h-1.5zM541.2 276.4h1.5v0.9h-1.5zM567.6 266.8h2.7v1.1h-2.7zM567.6 298.0h1.1v0.9h-1.1zM526.8 295.6h0.9v1.0h-0.9zM444.0 258.4h1.3v1.0h-1.3zM422.4 220.0h5.6v0.9h-5.6zM427.2 289.6h1.1v1.0h-1.1zM427.2 275.2h1.1v0.9h-1.1zM444.0 241.6h4.0v1.1h-4.0zM444.0 296.8h5.0v1.0h-5.0zM427.2 284.8h2.8v0.9h-2.8zM415.2 138.4h1.7v0.9h-1.7zM412.8 191.2h3.7v1.1h-3.7zM420.0 256.0h1.0v1.1h-1.0zM432.0 241.6h1.4v0.8h-1.4zM420.0 241.6h4.9v1.0h-4.9zM412.8 169.6h1.2v0.8h-1.2zM427.2 174.4h1.3v0.9h-1.3zM420.0 181.6h1.3v0.8h-1.3zM422.4 152.8h1.4v0.9h-1.4zM432.0 148.0h1.0v0.9h-1.0zM436.8 222.4h1.1v1.1h-1.1zM441.6 220.0h4.9v1.0h-4.9zM436.8 167.2h1.2v0.9h-1.2zM436.8 157.6h1.1v0.8h-1.1zM424.8 136.0h4.4v1.1h-4.4zM422.4 260.8h0.9v0.8h-0.9zM420.0 143.2h1.5v0.9h-1.5zM434.4 160.0h1.4v0.8h-1.4zM424.8 181.6h4.8v0.9h-4.8zM441.6 128.8h3.9v1.0h-3.9zM415.2 200.8h4.3v0.9h-4.3zM439.2 131.2h0.9v0.9h-0.9zM417.6 253.6h1.6v1.1h-1.6zM356.6 285.2h4.5v0.9h-4.5zM332.6 222.8h1.3v1.0h-1.3zM327.8 215.6h1.5v1.0h-1.5zM337.4 242.0h1.3v1.0h-1.3zM344.6 249.2h1.3v1.1h-1.3zM320.6 213.2h0.9v0.8h-0.9zM330.2 218.0h1.5v1.0h-1.5zM320.6 280.4h0.9v0.9h-0.9zM313.4 213.2h1.4v1.1h-1.4zM349.4 237.2h1.3v1.1h-1.3zM325.4 268.4h1.4v1.1h-1.4zM347.0 222.8h1.2v0.9h-1.2zM354.2 215.6h3.3v1.1h-3.3zM356.6 278.0h5.9v0.8h-5.9zM323.0 215.6h1.5v1.1h-1.5zM323.0 230.0h1.5v0.9h-1.5zM354.2 222.8h1.1v1.1h-1.1zM363.8 254.0h1.1v0.8h-1.1zM359.0 239.6h1.2v0.9h-1.2zM320.6 237.2h5.0v1.0h-5.0zM349.4 287.6h3.1v0.9h-3.1zM337.4 256.4h1.6v0.8h-1.6zM332.6 220.4h3.1v0.9h-3.1zM224.4 257.2h1.2v0.9h-1.2zM176.4 259.6h1.5v1.1h-1.5zM202.8 257.2h1.1v1.1h-1.1zM178.8 254.8h2.5v0.9h-2.5zM166.8 271.6h1.7v0.8h-1.7zM178.8 262.0h2.8v1.0h-2.8zM162.0 283.6h4.0v0.9h-4.0zM176.4 262.0h1.1v0.9h-1.1zM195.6 245.2h1.5v1.0h-1.5zM229.2 252.4h1.7v1.1h-1.7zM190.8 288.4h1.3v1.0h-1.3zM217.2 250.0h1.5v0.9h-1.5zM224.4 276.4h2.6v1.1h-2.6zM174.0 254.8h1.4v1.1h-1.4zM231.6 252.4h1.3v1.1h-1.3zM210.0 281.2h1.7v1.1h-1.7zM241.2 295.6h0.8v0.9h-0.8zM162.0 274.0h1.5v0.8h-1.5zM207.6 257.2h1.5v1.0h-1.5zM183.6 242.8h0.8v1.0h-0.8zM193.2 264.4h0.9v1.1h-0.9zM193.2 250.0h1.3v1.1h-1.3zM207.6 242.8h1.0v1.0h-1.0zM186.0 264.4h4.2v1.0h-4.2zM250.8 250.0h0.9v1.1h-0.9zM222.0 262.0h1.1v1.0h-1.1zM178.8 247.6h1.3v1.1h-1.3zM224.4 264.4h1.4v0.8h-1.4zM164.4 247.6h1.4v1.0h-1.4zM226.8 247.6h1.4v1.1h-1.4zM224.4 293.2h1.3v0.8h-1.3zM171.6 269.2h0.9v0.9h-0.9zM205.2 269.2h1.0v0.9h-1.0zM238.8 269.2h1.0v0.9h-1.0zM219.6 271.6h1.1v1.0h-1.1zM210.0 266.8h1.1v1.0h-1.1zM242.2 313.8h1.5v1.0h-1.5zM199.0 340.2h1.3v0.8h-1.3zM227.8 330.6h0.9v1.1h-0.9zM232.6 321.0h4.7v1.1h-4.7zM208.6 323.4h1.6v1.1h-1.6zM215.8 313.8h1.2v1.0h-1.2zM235.0 333.0h4.7v1.0h-4.7zM235.0 328.2h0.9v1.0h-0.9zM235.0 309.0h4.0v1.0h-4.0zM235.0 335.4h1.1v0.9h-1.1z"/>
<path fill="#c9a14e" opacity=".62" d="M550.8 278.8h1.6v0.9h-1.6zM570.0 298.0h1.1v1.1h-1.1zM534.0 274.0h4.4v1.0h-4.4zM560.4 298.0h1.1v0.9h-1.1zM567.6 288.4h1.4v0.9h-1.4zM565.2 262.0h1.2v0.9h-1.2zM529.2 269.2h5.3v1.1h-5.3zM572.4 283.6h5.2v0.8h-5.2zM432.0 172.0h1.6v1.1h-1.6zM415.2 210.4h0.9v1.0h-0.9zM410.4 236.8h1.1v1.1h-1.1zM417.6 150.4h1.1v1.0h-1.1zM432.0 162.4h1.4v0.9h-1.4zM427.2 212.8h4.4v0.9h-4.4zM436.8 164.8h0.9v1.1h-0.9zM439.2 275.2h1.2v1.1h-1.2zM439.2 280.0h1.0v0.9h-1.0zM412.8 282.4h1.2v0.9h-1.2zM408.0 191.2h0.8v1.1h-0.8zM427.2 210.4h1.6v1.1h-1.6zM420.0 270.4h1.2v0.9h-1.2zM415.2 260.8h1.5v1.1h-1.5zM408.0 280.0h1.5v1.0h-1.5zM415.2 140.8h3.3v1.1h-3.3zM410.4 256.0h1.6v0.9h-1.6zM432.0 222.4h1.3v1.0h-1.3zM439.2 138.4h1.6v0.8h-1.6zM424.8 284.8h1.3v0.8h-1.3zM441.6 143.2h3.8v0.8h-3.8zM415.2 292.0h1.2v1.0h-1.2zM434.4 236.8h1.3v0.9h-1.3zM327.8 285.2h1.0v0.8h-1.0zM330.2 215.6h1.4v1.0h-1.4zM363.8 225.2h2.7v0.9h-2.7zM325.4 258.8h1.1v1.0h-1.1zM363.8 208.4h1.3v1.1h-1.3zM339.8 261.2h1.3v1.1h-1.3zM354.2 278.0h0.9v1.1h-0.9zM349.4 218.0h1.1v1.1h-1.1zM363.8 244.4h5.8v1.0h-5.8zM354.2 273.2h1.0v0.9h-1.0zM337.4 292.4h1.2v0.9h-1.2zM354.2 273.2h1.4v1.1h-1.4zM313.4 292.4h1.5v1.1h-1.5zM318.2 287.6h1.0v1.0h-1.0zM323.0 208.4h4.0v0.8h-4.0zM335.0 258.8h1.2v0.9h-1.2zM325.4 249.2h0.9v1.1h-0.9zM315.8 261.2h1.0v1.1h-1.0zM318.2 227.6h1.3v1.0h-1.3zM320.6 230.0h3.2v0.8h-3.2zM323.0 237.2h1.5v1.0h-1.5zM318.2 266.0h1.6v0.8h-1.6zM356.6 208.4h0.9v1.1h-0.9zM359.0 234.8h5.0v1.1h-5.0zM354.2 287.6h0.9v1.0h-0.9zM241.2 278.8h1.3v1.0h-1.3zM212.4 274.0h1.5v1.0h-1.5zM222.0 288.4h1.3v0.9h-1.3zM171.6 276.4h5.1v1.0h-5.1zM224.4 274.0h1.0v1.0h-1.0zM229.2 252.4h1.1v0.8h-1.1zM231.6 257.2h1.5v1.1h-1.5zM169.2 242.8h5.0v1.1h-5.0zM181.2 271.6h1.0v0.9h-1.0zM226.8 266.8h1.4v1.1h-1.4zM207.6 269.2h4.5v1.1h-4.5zM188.4 259.6h1.5v1.1h-1.5zM169.2 283.6h1.4v1.1h-1.4zM202.8 245.2h1.3v0.9h-1.3zM198.0 298.0h4.3v1.0h-4.3zM171.6 274.0h1.1v1.0h-1.1zM238.8 259.6h1.3v1.0h-1.3zM178.8 274.0h1.2v0.8h-1.2zM210.0 254.8h1.6v0.8h-1.6zM207.6 240.4h1.6v0.8h-1.6zM193.2 247.6h0.8v1.0h-0.8zM243.6 266.8h1.4v1.0h-1.4zM238.8 252.4h5.6v1.0h-5.6zM248.4 276.4h1.2v1.0h-1.2zM241.2 293.2h0.8v1.0h-0.8zM178.8 259.6h1.6v0.9h-1.6zM174.0 271.6h4.9v0.9h-4.9zM246.0 257.2h1.1v0.9h-1.1zM226.8 276.4h3.0v0.9h-3.0zM178.8 278.8h1.6v0.9h-1.6zM195.6 295.6h5.2v1.1h-5.2zM217.2 264.4h0.9v0.9h-0.9zM188.4 278.8h1.6v1.1h-1.6zM231.6 278.8h1.3v1.1h-1.3zM207.6 271.6h1.2v0.8h-1.2zM205.2 281.2h1.4v0.8h-1.4zM236.4 242.8h1.1v1.1h-1.1zM229.2 278.8h1.2v0.9h-1.2zM193.2 245.2h1.5v0.8h-1.5zM249.4 328.2h1.7v1.1h-1.7zM206.2 323.4h1.4v1.0h-1.4zM225.4 321.0h1.3v1.1h-1.3zM203.8 318.6h1.2v1.1h-1.2zM189.4 318.6h4.6v0.8h-4.6zM220.6 323.4h1.2v0.9h-1.2zM235.0 337.8h4.3v1.1h-4.3zM223.0 311.4h1.7v1.0h-1.7z"/>
<path fill="#f2d98a" opacity=".62" d="M531.6 295.6h1.5v0.9h-1.5zM534.0 271.6h1.0v1.1h-1.0zM550.8 269.2h1.2v1.0h-1.2zM546.0 274.0h1.4v1.1h-1.4zM541.2 295.6h2.9v1.1h-2.9zM572.4 274.0h1.6v1.0h-1.6zM572.4 295.6h5.7v1.0h-5.7zM546.0 290.8h1.2v1.0h-1.2zM422.4 289.6h0.9v0.9h-0.9zM436.8 152.8h1.3v0.9h-1.3zM434.4 248.8h1.0v1.0h-1.0zM415.2 241.6h1.5v1.1h-1.5zM420.0 133.6h1.5v1.0h-1.5zM420.0 188.8h1.3v0.9h-1.3zM427.2 148.0h3.6v1.0h-3.6zM441.6 188.8h5.1v1.1h-5.1zM417.6 234.4h1.1v0.9h-1.1zM410.4 258.4h1.3v1.1h-1.3zM417.6 138.4h1.0v1.0h-1.0zM410.4 289.6h1.2v1.1h-1.2zM436.8 176.8h5.1v0.8h-5.1zM422.4 145.6h1.1v0.9h-1.1zM434.4 172.0h1.0v0.9h-1.0zM415.2 143.2h1.3v0.9h-1.3zM432.0 265.6h0.9v0.9h-0.9zM432.0 143.2h1.4v0.8h-1.4zM417.6 260.8h1.1v1.1h-1.1zM361.4 230.0h1.1v1.1h-1.1zM335.0 297.2h1.1v1.1h-1.1zM359.0 292.4h5.7v1.0h-5.7zM330.2 244.4h1.6v1.0h-1.6zM347.0 225.2h1.3v0.9h-1.3zM335.0 234.8h1.5v0.9h-1.5zM361.4 278.0h1.2v0.8h-1.2zM349.4 227.6h1.6v1.0h-1.6zM349.4 251.6h0.9v1.1h-0.9zM337.4 275.6h0.9v0.9h-0.9zM354.2 268.4h1.6v1.0h-1.6zM339.8 282.8h1.2v1.1h-1.2zM318.2 242.0h1.3v1.1h-1.3zM339.8 278.0h0.9v0.8h-0.9zM193.2 257.2h1.5v0.9h-1.5zM164.4 286.0h1.3v0.9h-1.3zM229.2 262.0h1.1v1.1h-1.1zM195.6 298.0h1.7v0.8h-1.7zM248.4 254.8h1.1v1.1h-1.1zM186.0 259.6h1.0v1.0h-1.0zM241.2 240.4h5.7v1.0h-5.7zM243.6 298.0h1.1v1.0h-1.1zM166.8 257.2h1.5v1.1h-1.5zM195.6 276.4h1.0v0.8h-1.0zM186.0 293.2h0.8v0.9h-0.8zM238.8 288.4h1.0v0.8h-1.0zM205.2 293.2h1.4v1.1h-1.4zM243.6 245.2h3.6v1.0h-3.6zM231.6 250.0h1.0v0.9h-1.0zM198.0 264.4h1.6v1.1h-1.6zM250.8 264.4h1.7v1.0h-1.7zM205.2 290.8h4.2v0.8h-4.2zM176.4 290.8h4.2v1.0h-4.2zM183.6 245.2h1.3v1.0h-1.3zM174.0 281.2h1.1v1.1h-1.1zM188.4 252.4h1.3v1.1h-1.3zM174.0 293.2h0.9v1.1h-0.9zM205.2 278.8h1.0v0.8h-1.0zM190.8 288.4h1.3v1.0h-1.3zM195.6 242.8h1.7v0.9h-1.7zM198.0 290.8h1.4v1.0h-1.4zM248.4 254.8h3.0v1.0h-3.0zM200.4 262.0h1.1v0.9h-1.1zM195.6 259.6h1.0v0.8h-1.0zM174.0 290.8h1.6v1.0h-1.6zM169.2 266.8h1.5v0.9h-1.5zM207.6 245.2h1.6v1.0h-1.6zM234.0 278.8h2.5v1.0h-2.5zM248.4 254.8h1.7v0.8h-1.7zM229.2 242.8h1.0v0.9h-1.0zM220.6 328.2h1.5v0.9h-1.5zM199.0 325.8h1.3v1.0h-1.3zM230.2 337.8h1.5v0.8h-1.5zM194.2 335.4h1.5v0.8h-1.5zM194.2 333.0h3.5v0.9h-3.5zM244.6 330.6h1.5v0.8h-1.5zM208.6 313.8h1.2v1.0h-1.2zM242.2 311.4h5.6v1.1h-5.6z"/>
<path fill="#ff2e60" d="M162.0 232.0h1.8v3.6h-1.8zM165.0 232.0h1.8v3.6h-1.8zM168.0 232.0h1.8v3.6h-1.8zM171.0 232.0h1.8v3.6h-1.8zM174.0 232.0h1.8v3.6h-1.8zM177.0 232.0h1.8v3.6h-1.8zM180.0 232.0h1.8v3.6h-1.8zM226.0 232.0h1.8v3.6h-1.8zM229.0 232.0h1.8v3.6h-1.8zM232.0 232.0h1.8v3.6h-1.8zM235.0 232.0h1.8v3.6h-1.8zM238.0 232.0h1.8v3.6h-1.8zM241.0 232.0h1.8v3.6h-1.8zM244.0 232.0h1.8v3.6h-1.8zM247.0 232.0h1.8v3.6h-1.8zM250.0 232.0h1.8v3.6h-1.8zM253.0 232.0h1.8v3.6h-1.8zM337.0 200.5h1.8v3.6h-1.8zM340.0 200.5h1.8v3.6h-1.8zM343.0 200.5h1.8v3.6h-1.8zM346.0 200.5h1.8v3.6h-1.8zM349.0 200.5h1.8v3.6h-1.8zM352.0 200.5h1.8v3.6h-1.8zM355.0 200.5h1.8v3.6h-1.8zM358.0 200.5h1.8v3.6h-1.8zM361.0 200.5h1.8v3.6h-1.8zM364.0 200.5h1.8v3.6h-1.8zM367.0 200.5h1.8v3.6h-1.8z"/>
<path fill="#ffd0dc" d="M162.0 232.8h1.2v2.0h-1.2zM165.0 232.8h1.2v2.0h-1.2zM168.0 232.8h1.2v2.0h-1.2zM171.0 232.8h1.2v2.0h-1.2zM174.0 232.8h1.2v2.0h-1.2zM177.0 232.8h1.2v2.0h-1.2zM180.0 232.8h1.2v2.0h-1.2zM226.0 232.8h1.2v2.0h-1.2zM229.0 232.8h1.2v2.0h-1.2zM232.0 232.8h1.2v2.0h-1.2zM235.0 232.8h1.2v2.0h-1.2zM238.0 232.8h1.2v2.0h-1.2zM241.0 232.8h1.2v2.0h-1.2zM244.0 232.8h1.2v2.0h-1.2zM247.0 232.8h1.2v2.0h-1.2zM250.0 232.8h1.2v2.0h-1.2zM253.0 232.8h1.2v2.0h-1.2zM337.0 201.3h1.2v2.0h-1.2zM340.0 201.3h1.2v2.0h-1.2zM343.0 201.3h1.2v2.0h-1.2zM346.0 201.3h1.2v2.0h-1.2zM349.0 201.3h1.2v2.0h-1.2zM352.0 201.3h1.2v2.0h-1.2zM355.0 201.3h1.2v2.0h-1.2zM358.0 201.3h1.2v2.0h-1.2zM361.0 201.3h1.2v2.0h-1.2zM364.0 201.3h1.2v2.0h-1.2zM367.0 201.3h1.2v2.0h-1.2z"/>
<path fill="#7ff0f0" d="M309.0 290.0h2.0v3.8h-2.0zM312.0 290.0h2.0v3.8h-2.0zM315.0 290.0h2.0v3.8h-2.0zM318.0 290.0h2.0v3.8h-2.0zM321.0 290.0h2.0v3.8h-2.0zM324.0 290.0h2.0v3.8h-2.0zM327.0 290.0h2.0v3.8h-2.0zM330.0 290.0h2.0v3.8h-2.0zM333.0 290.0h2.0v3.8h-2.0zM336.0 290.0h2.0v3.8h-2.0z"/>
<path fill="#8ff4f0" d="M548.0 255.0h2.2v3.8h-2.2zM551.2 255.0h2.2v3.8h-2.2zM554.4 255.0h2.2v3.8h-2.2zM557.6 255.0h2.2v3.8h-2.2zM560.8 255.0h2.2v3.8h-2.2zM564.0 255.0h2.2v3.8h-2.2zM567.2 255.0h2.2v3.8h-2.2zM570.4 255.0h2.2v3.8h-2.2zM573.6 255.0h2.2v3.8h-2.2zM576.8 255.0h2.2v3.8h-2.2zM520.0 255.0h2.2v3.8h-2.2zM523.2 255.0h2.2v3.8h-2.2z"/>
<path fill="#ffffff" d="M454.5 212.5h4.6v3.4h-4.6zM460.6 212.5h4.6v3.4h-4.6zM126.0 372.0h3.0v3.0h-3.0zM445.0 341.0h2.6v2.6h-2.6zM442.0 356.0h2.6v2.6h-2.6z"/>
<path fill="#f4f4ff" d="M457.0 281.8h13.0v2.4h-13.0zM466.0 289.0h12.0v2.4h-12.0z"/>
<path fill="#ffb060" d="M407.0 166.6h1.1v1.8h-1.1zM408.6 166.6h1.1v1.8h-1.1zM410.2 166.6h1.1v1.8h-1.1zM411.8 166.6h1.1v1.8h-1.1zM413.4 166.6h1.1v1.8h-1.1zM415.0 166.6h1.1v1.8h-1.1zM416.6 166.6h1.1v1.8h-1.1zM418.2 166.6h1.1v1.8h-1.1zM419.8 166.6h1.1v1.8h-1.1zM421.4 166.6h1.1v1.8h-1.1zM423.0 166.6h1.1v1.8h-1.1zM424.6 166.6h1.1v1.8h-1.1zM426.2 166.6h1.1v1.8h-1.1zM427.8 166.6h1.1v1.8h-1.1z"/>
<path fill="#ff9a4a" d="M260.0 274.0h1.1v1.8h-1.1zM261.6 274.0h1.1v1.8h-1.1zM263.2 274.0h1.1v1.8h-1.1zM264.8 274.0h1.1v1.8h-1.1zM266.4 274.0h1.1v1.8h-1.1zM268.0 274.0h1.1v1.8h-1.1zM269.6 274.0h1.1v1.8h-1.1zM271.2 274.0h1.1v1.8h-1.1zM272.8 274.0h1.1v1.8h-1.1zM274.4 274.0h1.1v1.8h-1.1zM276.0 274.0h1.1v1.8h-1.1zM277.6 274.0h1.1v1.8h-1.1zM279.2 274.0h1.1v1.8h-1.1zM280.8 274.0h1.1v1.8h-1.1zM282.4 274.0h1.1v1.8h-1.1zM284.0 274.0h1.1v1.8h-1.1zM285.6 274.0h1.1v1.8h-1.1zM287.2 274.0h1.1v1.8h-1.1zM288.8 274.0h1.1v1.8h-1.1zM290.4 274.0h1.1v1.8h-1.1zM292.0 274.0h1.1v1.8h-1.1zM293.6 274.0h1.1v1.8h-1.1zM295.2 274.0h1.1v1.8h-1.1zM296.8 274.0h1.1v1.8h-1.1zM298.4 274.0h1.1v1.8h-1.1zM300.0 274.0h1.1v1.8h-1.1zM301.6 274.0h1.1v1.8h-1.1zM303.2 274.0h1.1v1.8h-1.1zM304.8 274.0h1.1v1.8h-1.1z"/>
<path fill="#ff8a4a" d="M262.0 267.5h1.0v1.4h-1.0zM263.6 267.5h1.0v1.4h-1.0zM265.2 267.5h1.0v1.4h-1.0zM266.8 267.5h1.0v1.4h-1.0zM268.4 267.5h1.0v1.4h-1.0zM270.0 267.5h1.0v1.4h-1.0zM271.6 267.5h1.0v1.4h-1.0zM273.2 267.5h1.0v1.4h-1.0zM274.8 267.5h1.0v1.4h-1.0zM276.4 267.5h1.0v1.4h-1.0zM278.0 267.5h1.0v1.4h-1.0zM279.6 267.5h1.0v1.4h-1.0zM281.2 267.5h1.0v1.4h-1.0z"/>
<path fill="#ffc070" d="M676.0 291.6h1.1v1.8h-1.1zM677.5 291.6h1.1v1.8h-1.1zM679.0 291.6h1.1v1.8h-1.1zM680.5 291.6h1.1v1.8h-1.1zM682.0 291.6h1.1v1.8h-1.1zM683.5 291.6h1.1v1.8h-1.1zM685.0 291.6h1.1v1.8h-1.1zM686.5 291.6h1.1v1.8h-1.1zM688.0 291.6h1.1v1.8h-1.1z"/>
<path fill="#e8e070" d="M706.0 293.2h1.1v1.6h-1.1zM707.5 293.2h1.1v1.6h-1.1zM709.0 293.2h1.1v1.6h-1.1zM710.5 293.2h1.1v1.6h-1.1zM712.0 293.2h1.1v1.6h-1.1zM713.5 293.2h1.1v1.6h-1.1zM715.0 293.2h1.1v1.6h-1.1zM716.5 293.2h1.1v1.6h-1.1zM718.0 293.2h1.1v1.6h-1.1zM719.5 293.2h1.1v1.6h-1.1zM721.0 293.2h1.1v1.6h-1.1zM722.5 293.2h1.1v1.6h-1.1zM724.0 293.2h1.1v1.6h-1.1zM725.5 293.2h1.1v1.6h-1.1zM727.0 293.2h1.1v1.6h-1.1zM728.5 293.2h1.1v1.6h-1.1zM730.0 293.2h1.1v1.6h-1.1zM731.5 293.2h1.1v1.6h-1.1zM733.0 293.2h1.1v1.6h-1.1zM716.6 294.0h1.2v1.3h-1.2zM719.6 294.0h1.2v1.3h-1.2zM716.6 296.2h1.2v1.3h-1.2zM719.6 296.2h1.2v1.3h-1.2zM716.6 298.4h1.2v1.3h-1.2zM719.6 298.4h1.2v1.3h-1.2zM716.6 300.6h1.2v1.3h-1.2zM719.6 300.6h1.2v1.3h-1.2zM716.6 302.8h1.2v1.3h-1.2zM719.6 302.8h1.2v1.3h-1.2zM716.6 305.0h1.2v1.3h-1.2zM719.6 305.0h1.2v1.3h-1.2zM716.6 307.2h1.2v1.3h-1.2zM719.6 307.2h1.2v1.3h-1.2zM716.6 309.4h1.2v1.3h-1.2zM719.6 309.4h1.2v1.3h-1.2zM716.6 311.6h1.2v1.3h-1.2zM719.6 311.6h1.2v1.3h-1.2zM716.6 313.8h1.2v1.3h-1.2zM719.6 313.8h1.2v1.3h-1.2zM716.6 316.0h1.2v1.3h-1.2zM719.6 316.0h1.2v1.3h-1.2zM716.6 318.2h1.2v1.3h-1.2zM719.6 318.2h1.2v1.3h-1.2zM716.6 320.4h1.2v1.3h-1.2zM719.6 320.4h1.2v1.3h-1.2zM716.6 322.6h1.2v1.3h-1.2zM719.6 322.6h1.2v1.3h-1.2zM716.6 324.8h1.2v1.3h-1.2zM719.6 324.8h1.2v1.3h-1.2zM716.6 327.0h1.2v1.3h-1.2zM719.6 327.0h1.2v1.3h-1.2zM716.6 329.2h1.2v1.3h-1.2zM719.6 329.2h1.2v1.3h-1.2zM716.6 331.4h1.2v1.3h-1.2zM719.6 331.4h1.2v1.3h-1.2zM716.6 333.6h1.2v1.3h-1.2zM719.6 333.6h1.2v1.3h-1.2zM716.6 335.8h1.2v1.3h-1.2zM719.6 335.8h1.2v1.3h-1.2zM716.6 338.0h1.2v1.3h-1.2zM719.6 338.0h1.2v1.3h-1.2zM716.6 340.2h1.2v1.3h-1.2zM719.6 340.2h1.2v1.3h-1.2zM716.6 342.4h1.2v1.3h-1.2zM719.6 342.4h1.2v1.3h-1.2zM716.6 344.6h1.2v1.3h-1.2zM719.6 344.6h1.2v1.3h-1.2zM716.6 346.8h1.2v1.3h-1.2zM719.6 346.8h1.2v1.3h-1.2zM716.6 349.0h1.2v1.3h-1.2zM719.6 349.0h1.2v1.3h-1.2zM716.6 351.2h1.2v1.3h-1.2zM719.6 351.2h1.2v1.3h-1.2zM716.6 353.4h1.2v1.3h-1.2zM719.6 353.4h1.2v1.3h-1.2zM716.6 355.6h1.2v1.3h-1.2zM719.6 355.6h1.2v1.3h-1.2zM716.6 357.8h1.2v1.3h-1.2zM719.6 357.8h1.2v1.3h-1.2z"/>
<path fill="#8a8fa8" opacity=".62" d="M108.8 324.6h1.4v0.9h-1.4zM150.4 358.4h1.5v0.8h-1.5zM137.4 340.2h1.1v1.0h-1.1zM129.6 309.0h0.8v1.0h-0.8zM41.2 345.4h0.8v1.1h-0.8zM75.0 311.6h1.1v0.9h-1.1zM59.4 368.8h5.4v1.0h-5.4zM134.8 319.4h1.6v1.1h-1.6zM20.4 353.2h1.5v0.9h-1.5zM82.8 332.4h1.7v1.1h-1.7zM119.2 335.0h1.2v0.8h-1.2zM85.4 374.0h1.6v1.1h-1.6zM90.6 366.2h1.6v0.9h-1.6zM15.2 316.8h1.3v0.9h-1.3zM140.0 355.8h2.8v0.9h-2.8zM106.2 376.6h1.2v0.9h-1.2zM59.4 363.6h1.2v1.0h-1.2zM41.2 324.6h1.1v1.1h-1.1zM23.0 337.6h1.6v1.0h-1.6zM80.2 335.0h1.3v0.8h-1.3zM108.8 366.2h1.3v1.0h-1.3zM98.4 324.6h4.4v1.0h-4.4zM77.6 371.4h1.4v1.1h-1.4zM15.2 322.0h1.6v0.9h-1.6zM119.2 350.6h1.6v1.1h-1.6zM41.2 353.2h1.4v0.9h-1.4zM140.0 350.6h2.9v1.0h-2.9zM56.8 371.4h1.2v1.0h-1.2zM90.6 311.6h5.6v0.8h-5.6zM75.0 371.4h1.1v1.1h-1.1zM106.2 366.2h1.6v1.1h-1.6zM30.8 322.0h0.8v1.0h-0.8zM33.4 368.8h1.3v1.0h-1.3zM282.0 327.2h1.3v0.8h-1.3zM172.8 309.0h1.6v0.9h-1.6zM302.8 332.4h1.0v1.0h-1.0zM282.0 335.0h1.4v1.1h-1.4zM183.2 353.2h1.4v0.9h-1.4zM256.0 327.2h1.2v0.9h-1.2zM269.0 353.2h3.3v0.9h-3.3zM206.6 345.4h1.3v0.9h-1.3zM167.6 337.6h1.3v1.0h-1.3zM305.4 337.6h0.8v1.0h-0.8zM232.6 311.6h0.8v0.8h-0.8zM318.4 316.8h0.9v0.9h-0.9zM170.2 366.2h1.5v1.1h-1.5zM292.4 345.4h1.2v0.9h-1.2zM183.2 350.6h1.2v1.1h-1.2zM279.4 355.8h0.8v0.8h-0.8zM243.0 329.8h1.4v1.0h-1.4zM224.8 363.6h1.7v0.9h-1.7zM227.4 314.2h1.5v0.9h-1.5zM224.8 319.4h5.2v1.0h-5.2zM240.4 358.4h0.9v0.8h-0.9zM201.4 363.6h1.4v1.0h-1.4zM250.8 361.0h0.9v1.0h-0.9zM258.6 353.2h5.9v1.0h-5.9zM308.0 355.8h1.5v0.9h-1.5zM211.8 374.0h3.9v1.1h-3.9zM185.8 363.6h1.5v1.0h-1.5zM235.2 322.0h1.4v1.0h-1.4zM222.2 327.2h1.5v0.9h-1.5zM300.2 319.4h0.9v1.1h-0.9zM245.6 374.0h0.8v1.0h-0.8zM356.8 324.6h5.5v1.0h-5.5zM336.0 345.4h1.2v1.1h-1.2zM343.8 355.8h1.1v0.9h-1.1zM351.6 332.4h2.7v1.1h-2.7zM359.4 314.2h1.2v0.9h-1.2zM354.2 371.4h1.7v0.9h-1.7zM356.8 374.0h1.2v1.0h-1.2zM362.0 340.2h1.0v1.1h-1.0zM338.6 322.0h1.0v0.9h-1.0zM419.8 348.0h1.1v0.9h-1.1zM461.4 335.0h0.8v0.8h-0.8zM427.6 374.0h1.2v1.0h-1.2zM451.0 337.6h0.9v1.0h-0.9zM425.0 327.2h1.2v0.9h-1.2zM451.0 350.6h0.8v1.1h-0.8zM458.8 340.2h0.9v1.1h-0.9zM438.0 314.2h1.4v0.9h-1.4zM471.8 335.0h1.0v1.0h-1.0zM469.2 355.8h1.1v0.9h-1.1zM422.4 327.2h0.9v1.1h-0.9zM445.8 332.4h1.5v1.0h-1.5zM432.8 361.0h1.5v1.1h-1.5zM438.0 327.2h1.5v0.9h-1.5zM456.2 350.6h1.4v1.1h-1.4zM438.0 324.6h1.2v0.8h-1.2zM438.0 335.0h1.0v1.1h-1.0zM419.8 342.8h1.0v1.0h-1.0zM458.8 311.6h1.6v1.0h-1.6zM477.0 363.6h1.4v1.0h-1.4zM432.8 324.6h5.6v0.9h-5.6zM445.8 309.0h1.6v0.9h-1.6zM414.6 314.2h1.1v1.0h-1.1zM495.2 374.0h1.7v1.0h-1.7zM578.4 327.2h1.7v1.1h-1.7zM596.6 335.0h1.3v0.8h-1.3zM633.0 355.8h1.6v1.1h-1.6zM526.4 335.0h1.6v1.1h-1.6zM547.2 345.4h1.3v1.0h-1.3zM510.8 353.2h4.4v0.9h-4.4zM560.2 350.6h1.5v0.8h-1.5zM607.0 332.4h1.2v1.0h-1.2zM617.4 319.4h1.4v1.1h-1.4zM612.2 332.4h4.2v0.9h-4.2zM581.0 376.6h1.6v1.1h-1.6zM591.4 348.0h1.3v1.1h-1.3zM497.8 329.8h5.2v0.9h-5.2zM544.6 376.6h1.3v1.1h-1.3zM500.4 355.8h1.7v1.0h-1.7zM607.0 335.0h1.6v0.9h-1.6zM500.4 353.2h3.1v1.1h-3.1zM531.6 376.6h1.5v1.0h-1.5zM492.6 322.0h5.2v1.0h-5.2zM560.2 355.8h1.4v0.8h-1.4zM508.2 335.0h1.3v0.9h-1.3zM630.4 366.2h2.7v0.9h-2.7zM521.2 309.0h1.5v1.1h-1.5zM573.2 332.4h0.9v1.1h-0.9zM630.4 332.4h1.0v0.8h-1.0zM497.8 368.8h1.0v1.0h-1.0zM510.8 350.6h1.0v0.9h-1.0zM614.8 337.6h1.6v1.1h-1.6zM640.8 322.0h1.0v0.9h-1.0zM549.8 340.2h1.1v0.8h-1.1zM601.8 371.4h1.5v0.9h-1.5zM591.4 374.0h1.7v0.9h-1.7zM531.6 337.6h2.5v1.0h-2.5zM557.6 332.4h3.2v0.9h-3.2zM505.6 350.6h1.3v1.0h-1.3zM536.8 314.2h1.6v1.1h-1.6zM622.6 327.2h1.6v1.0h-1.6zM601.8 324.6h0.8v1.0h-0.8zM630.4 376.6h1.7v0.9h-1.7zM586.2 368.8h1.3v1.0h-1.3zM575.8 368.8h1.2v1.1h-1.2zM601.8 309.0h0.9v1.1h-0.9zM531.6 316.8h1.1v1.1h-1.1zM568.0 322.0h1.6v1.0h-1.6zM591.4 311.6h4.0v1.0h-4.0zM529.0 355.8h0.9v1.1h-0.9zM620.0 314.2h0.9v0.9h-0.9zM560.2 366.2h0.9v0.8h-0.9zM516.0 340.2h0.9v1.0h-0.9zM599.2 376.6h1.6v0.9h-1.6zM594.0 368.8h1.0v0.9h-1.0zM570.6 376.6h1.2v0.9h-1.2zM643.4 332.4h1.6v1.1h-1.6zM513.4 363.6h3.8v0.9h-3.8zM531.6 309.0h1.5v1.0h-1.5zM698.4 337.6h1.0v1.0h-1.0zM734.8 371.4h1.2v1.1h-1.2zM672.4 342.8h1.2v0.8h-1.2zM669.8 350.6h1.3v0.8h-1.3zM664.6 376.6h5.8v1.0h-5.8zM708.8 350.6h3.1v1.0h-3.1zM740.0 368.8h1.6v1.0h-1.6zM688.0 355.8h1.4v1.1h-1.4zM664.6 340.2h4.7v1.0h-4.7zM688.0 311.6h1.2v1.1h-1.2zM672.4 335.0h1.5v0.9h-1.5zM721.8 324.6h1.7v0.9h-1.7zM685.4 340.2h1.5v1.0h-1.5zM693.2 322.0h3.6v1.0h-3.6zM737.4 342.8h0.8v0.9h-0.8zM690.6 358.4h1.3v1.0h-1.3zM719.2 340.2h1.4v0.9h-1.4zM669.8 348.0h1.7v1.1h-1.7zM669.8 329.8h1.2v0.9h-1.2zM664.6 324.6h1.7v1.1h-1.7zM685.4 355.8h5.6v0.9h-5.6zM740.0 358.4h3.7v1.1h-3.7zM690.6 309.0h2.7v1.1h-2.7zM729.6 324.6h1.3v0.9h-1.3zM698.4 311.6h4.0v0.8h-4.0zM711.4 350.6h1.3v1.1h-1.3z"/>
<path fill="#c8cce0" opacity=".62" d="M20.4 355.8h1.3v1.0h-1.3zM119.2 314.2h1.3v0.9h-1.3zM95.8 361.0h1.4v0.9h-1.4zM72.4 342.8h1.0v1.0h-1.0zM54.2 319.4h1.1v1.1h-1.1zM124.4 376.6h1.0v0.9h-1.0zM80.2 342.8h1.5v0.9h-1.5zM111.4 324.6h1.3v1.0h-1.3zM62.0 337.6h1.1v1.1h-1.1zM116.6 368.8h1.2v0.9h-1.2zM129.6 353.2h2.5v0.9h-2.5zM90.6 322.0h1.1v1.1h-1.1zM101.0 342.8h1.6v0.9h-1.6zM119.2 316.8h1.0v1.0h-1.0zM121.8 337.6h1.0v1.1h-1.0zM17.8 355.8h1.5v1.1h-1.5zM23.0 355.8h1.5v1.1h-1.5zM132.2 332.4h1.3v1.1h-1.3zM12.6 366.2h0.9v1.0h-0.9zM75.0 309.0h2.7v0.9h-2.7zM67.2 319.4h0.9v1.1h-0.9zM129.6 340.2h1.6v0.9h-1.6zM145.2 355.8h0.9v0.9h-0.9zM69.8 322.0h1.3v1.1h-1.3zM106.2 314.2h1.4v0.9h-1.4zM75.0 319.4h0.9v0.9h-0.9zM95.8 322.0h1.6v0.9h-1.6zM17.8 379.2h1.3v0.8h-1.3zM12.6 355.8h1.3v0.8h-1.3zM93.2 366.2h1.6v1.0h-1.6zM302.8 355.8h1.2v0.9h-1.2zM196.2 366.2h4.0v1.0h-4.0zM201.4 335.0h5.6v0.8h-5.6zM305.4 316.8h1.3v1.0h-1.3zM201.4 361.0h1.6v1.0h-1.6zM318.4 309.0h5.5v0.9h-5.5zM204.0 332.4h1.6v1.0h-1.6zM214.4 342.8h1.0v1.0h-1.0zM274.2 358.4h1.7v1.0h-1.7zM302.8 376.6h0.9v1.0h-0.9zM289.8 337.6h1.6v1.0h-1.6zM315.8 329.8h1.4v1.0h-1.4zM230.0 366.2h1.5v1.0h-1.5zM232.6 363.6h1.4v1.1h-1.4zM245.6 361.0h1.3v1.1h-1.3zM318.4 348.0h0.9v1.1h-0.9zM274.2 327.2h5.5v0.9h-5.5zM308.0 319.4h1.6v0.9h-1.6zM167.6 345.4h1.0v1.0h-1.0zM180.6 358.4h1.0v1.1h-1.0zM308.0 332.4h1.0v1.0h-1.0zM211.8 350.6h3.9v0.9h-3.9zM232.6 319.4h1.4v1.1h-1.4zM338.6 345.4h1.0v0.8h-1.0zM341.2 350.6h1.3v0.9h-1.3zM343.8 322.0h1.4v0.8h-1.4zM362.0 314.2h0.9v1.1h-0.9zM343.8 371.4h1.3v0.8h-1.3zM338.6 366.2h1.7v1.1h-1.7zM349.0 335.0h1.5v0.9h-1.5zM425.0 368.8h4.4v0.8h-4.4zM448.4 311.6h1.4v0.9h-1.4zM448.4 376.6h0.8v1.1h-0.8zM456.2 355.8h1.4v0.9h-1.4zM440.6 376.6h1.3v1.0h-1.3zM466.6 345.4h3.2v0.8h-3.2zM430.2 311.6h5.1v1.0h-5.1zM464.0 376.6h0.9v0.8h-0.9zM443.2 374.0h1.3v1.0h-1.3zM440.6 327.2h4.8v1.0h-4.8zM417.2 329.8h5.7v1.0h-5.7zM474.4 335.0h1.1v1.1h-1.1zM419.8 324.6h1.1v0.9h-1.1zM461.4 332.4h1.0v1.0h-1.0zM477.0 335.0h1.7v1.0h-1.7zM419.8 361.0h1.7v1.1h-1.7zM430.2 345.4h4.7v0.8h-4.7zM435.4 329.8h5.1v0.9h-5.1zM586.2 314.2h1.5v1.1h-1.5zM596.6 316.8h5.2v0.8h-5.2zM604.4 337.6h5.0v0.9h-5.0zM523.8 319.4h1.7v0.9h-1.7zM510.8 371.4h4.2v1.1h-4.2zM578.4 376.6h5.1v1.0h-5.1zM630.4 332.4h1.5v0.9h-1.5zM622.6 353.2h0.8v0.9h-0.8zM596.6 319.4h3.7v0.9h-3.7zM518.6 316.8h1.1v0.8h-1.1zM601.8 319.4h1.0v1.0h-1.0zM627.8 311.6h3.3v1.1h-3.3zM633.0 361.0h1.6v0.9h-1.6zM542.0 374.0h1.4v1.1h-1.4zM495.2 324.6h1.0v1.0h-1.0zM531.6 316.8h4.4v1.1h-4.4zM630.4 337.6h1.5v1.1h-1.5zM575.8 329.8h1.4v0.8h-1.4zM570.6 337.6h2.9v1.1h-2.9zM562.8 327.2h1.7v1.1h-1.7zM492.6 314.2h1.6v0.8h-1.6zM609.6 345.4h0.9v1.0h-0.9zM544.6 366.2h0.9v0.9h-0.9zM492.6 311.6h3.0v1.1h-3.0zM575.8 376.6h1.7v0.9h-1.7zM523.8 324.6h1.0v0.9h-1.0zM607.0 363.6h4.9v0.9h-4.9zM638.2 340.2h1.7v1.1h-1.7zM617.4 371.4h1.0v1.1h-1.0zM614.8 366.2h1.4v1.0h-1.4zM583.6 319.4h0.9v1.0h-0.9zM622.6 309.0h0.9v0.9h-0.9zM583.6 374.0h1.3v1.1h-1.3zM594.0 374.0h1.3v0.9h-1.3zM693.2 345.4h1.1v1.0h-1.1zM675.0 342.8h3.6v0.9h-3.6zM734.8 335.0h4.2v0.8h-4.2zM729.6 327.2h1.0v1.0h-1.0zM672.4 374.0h1.4v0.9h-1.4zM672.4 324.6h1.4v0.9h-1.4zM740.0 363.6h1.5v0.8h-1.5zM703.6 314.2h1.6v0.9h-1.6zM680.2 348.0h4.1v1.0h-4.1zM667.2 311.6h1.3v0.9h-1.3zM688.0 322.0h1.1v1.0h-1.1zM667.2 345.4h1.0v0.8h-1.0zM667.2 329.8h1.2v0.8h-1.2zM706.2 361.0h1.3v0.9h-1.3zM714.0 340.2h1.1v1.0h-1.1z"/>
<path fill="#40c8d8" d="M142.6 355.8h0.9v0.9h-0.9zM140.0 363.6h1.5v1.0h-1.5zM101.0 319.4h1.3v0.9h-1.3zM17.8 327.2h1.1v1.0h-1.1zM62.0 374.0h0.9v0.9h-0.9zM10.0 361.0h1.4v0.9h-1.4zM127.0 374.0h1.3v0.8h-1.3zM134.8 335.0h1.2v1.1h-1.2zM54.2 314.2h0.9v1.1h-0.9zM142.6 337.6h5.6v0.8h-5.6zM88.0 374.0h1.1v1.1h-1.1zM77.6 342.8h1.1v1.1h-1.1zM132.2 366.2h1.7v1.1h-1.7zM430.2 353.2h0.9v1.1h-0.9zM427.6 314.2h1.4v1.0h-1.4zM477.0 379.2h1.2v1.1h-1.2zM414.6 342.8h1.0v1.1h-1.0zM445.8 332.4h1.4v1.0h-1.4zM422.4 322.0h1.2v0.9h-1.2zM422.4 376.6h1.1v1.0h-1.1zM427.6 363.6h1.1v1.0h-1.1zM412.0 316.8h0.9v1.0h-0.9zM84.0 335.0h1.6v1.8h-1.6zM86.6 335.0h1.6v1.8h-1.6zM89.2 335.0h1.6v1.8h-1.6zM91.8 335.0h1.6v1.8h-1.6zM94.4 335.0h1.6v1.8h-1.6zM97.0 335.0h1.6v1.8h-1.6zM99.6 335.0h1.6v1.8h-1.6zM102.2 335.0h1.6v1.8h-1.6z"/>
<path fill="#40a8e8" opacity=".62" d="M583.6 337.6h1.0v1.1h-1.0zM529.0 342.8h4.7v0.8h-4.7zM503.0 327.2h1.1v1.0h-1.1zM609.6 324.6h5.9v1.0h-5.9zM614.8 371.4h1.0v1.1h-1.0zM581.0 332.4h1.5v0.9h-1.5zM599.2 368.8h1.0v0.8h-1.0zM542.0 316.8h1.3v0.8h-1.3zM573.2 358.4h1.5v0.9h-1.5zM518.6 358.4h1.0v0.9h-1.0zM534.2 379.2h1.1v1.1h-1.1zM536.8 329.8h1.7v0.9h-1.7zM497.8 340.2h1.7v0.8h-1.7zM607.0 358.4h0.8v1.1h-0.8zM518.6 314.2h3.2v1.0h-3.2z"/>
<path fill="#30c8d8" d="M84.0 311.0h2.0v2.0h-2.0zM87.4 311.0h2.0v2.0h-2.0zM90.8 311.0h2.0v2.0h-2.0zM94.2 311.0h2.0v2.0h-2.0zM78.0 323.5h2.0v2.0h-2.0zM81.4 323.5h2.0v2.0h-2.0zM84.8 323.5h2.0v2.0h-2.0zM88.2 323.5h2.0v2.0h-2.0zM91.6 323.5h2.0v2.0h-2.0zM95.0 323.5h2.0v2.0h-2.0z"/>
<path fill="#30b8c8" d="M453.0 350.0h2.2v2.6h-2.2zM456.2 350.0h2.2v2.6h-2.2zM459.4 350.0h2.2v2.6h-2.2zM462.6 350.0h2.2v2.6h-2.2zM465.8 350.0h2.2v2.6h-2.2zM469.0 350.0h2.2v2.6h-2.2zM472.2 350.0h2.2v2.6h-2.2zM475.4 350.0h2.2v2.6h-2.2zM478.6 350.0h2.2v2.6h-2.2zM481.8 350.0h2.2v2.6h-2.2z"/>
<path fill="#50d0e0" d="M447.0 356.5h2.2v2.6h-2.2zM450.2 356.5h2.2v2.6h-2.2zM453.4 356.5h2.2v2.6h-2.2zM456.6 356.5h2.2v2.6h-2.2zM459.8 356.5h2.2v2.6h-2.2zM463.0 356.5h2.2v2.6h-2.2zM466.2 356.5h2.2v2.6h-2.2zM469.4 356.5h2.2v2.6h-2.2z"/>
<path fill="#f0f0f0" d="M175.0 310.5h2.6v2.6h-2.6zM491.0 378.0h2.4v2.4h-2.4z"/>
<path fill="#d8d8e8" opacity=".62" d="M572.0 341.5h1.5v1.8h-1.5zM574.2 341.5h1.5v1.8h-1.5zM576.4 341.5h1.5v1.8h-1.5zM578.6 341.5h1.5v1.8h-1.5zM580.8 341.5h1.5v1.8h-1.5zM583.0 341.5h1.5v1.8h-1.5zM585.2 341.5h1.5v1.8h-1.5zM587.4 341.5h1.5v1.8h-1.5zM589.6 341.5h1.5v1.8h-1.5zM591.8 341.5h1.5v1.8h-1.5zM594.0 341.5h1.5v1.8h-1.5zM596.2 341.5h1.5v1.8h-1.5zM598.4 341.5h1.5v1.8h-1.5zM600.6 341.5h1.5v1.8h-1.5zM602.8 341.5h1.5v1.8h-1.5zM605.0 341.5h1.5v1.8h-1.5zM607.2 341.5h1.5v1.8h-1.5zM609.4 341.5h1.5v1.8h-1.5zM611.6 341.5h1.5v1.8h-1.5z"/>
<path fill="#c8c8d8" opacity=".62" d="M578.0 353.0h1.5v1.8h-1.5zM580.4 353.0h1.5v1.8h-1.5zM582.8 353.0h1.5v1.8h-1.5zM585.2 353.0h1.5v1.8h-1.5zM587.6 353.0h1.5v1.8h-1.5zM590.0 353.0h1.5v1.8h-1.5zM592.4 353.0h1.5v1.8h-1.5zM594.8 353.0h1.5v1.8h-1.5zM597.2 353.0h1.5v1.8h-1.5zM599.6 353.0h1.5v1.8h-1.5zM602.0 353.0h1.5v1.8h-1.5zM604.4 353.0h1.5v1.8h-1.5zM606.8 353.0h1.5v1.8h-1.5zM609.2 353.0h1.5v1.8h-1.5zM611.6 353.0h1.5v1.8h-1.5zM614.0 353.0h1.5v1.8h-1.5zM616.4 353.0h1.5v1.8h-1.5zM618.8 353.0h1.5v1.8h-1.5zM621.2 353.0h1.5v1.8h-1.5zM623.6 353.0h1.5v1.8h-1.5zM626.0 353.0h1.5v1.8h-1.5zM628.4 353.0h1.5v1.8h-1.5zM630.8 353.0h1.5v1.8h-1.5zM633.2 353.0h1.5v1.8h-1.5zM635.6 353.0h1.5v1.8h-1.5zM638.0 353.0h1.5v1.8h-1.5z"/>
<path fill="#b8b8c8" opacity=".62" d="M264.0 357.5h1.5v1.8h-1.5zM266.2 357.5h1.5v1.8h-1.5zM268.4 357.5h1.5v1.8h-1.5zM270.6 357.5h1.5v1.8h-1.5zM272.8 357.5h1.5v1.8h-1.5zM275.0 357.5h1.5v1.8h-1.5zM277.2 357.5h1.5v1.8h-1.5zM279.4 357.5h1.5v1.8h-1.5zM281.6 357.5h1.5v1.8h-1.5zM283.8 357.5h1.5v1.8h-1.5zM286.0 357.5h1.5v1.8h-1.5zM288.2 357.5h1.5v1.8h-1.5zM290.4 357.5h1.5v1.8h-1.5zM292.6 357.5h1.5v1.8h-1.5zM294.8 357.5h1.5v1.8h-1.5zM297.0 357.5h1.5v1.8h-1.5z"/>
<rect x="355" y="286" width="16" height="74" fill="#c8c8ff" opacity=".12"/>
<path d="M360.500 357v-67h6v67" fill="none" stroke="#f0f0ff" stroke-width="1.5"/>
<path fill="#010102" d="M0 303.500h759v6H0zM0 327h759v5H0zM0 359.500h759v4.500H0zM0 382h759v9H0zM0 303.500h8.300V391H0zM154 303.500h8.400V391H154zM325.500 303.500h9V391h-9zM481 303.500h8V391h-8zM652 303.500h8V391h-8zM745 281h14v110h-14z"/>
<path fill="#020204" d="M393.800 242C388 242 381 246 378.900 252.200 377.500 256 377 260 376.500 263.200 375.500 266.500 374 268.500 372.600 270.300L378 271.900C375 273.500 373 276 371.800 279L367.900 293.100 364.700 304.200 367.900 315.200 368.600 329.400 367.900 340.400 371 356.100 376.500 368.700 381.200 384H402.500L404.900 365.600 407.200 349.800 408.800 329.400 411.200 312 412.700 296.300C412.500 292 412 288.500 411.200 285.300 410 281 408.500 277 406.400 274.200L403.300 271.100 407.200 269.500C407.500 266 407.500 262 407.200 258.500 406.500 255 405 251.500 403.300 249 402 246.500 400.500 244.800 398.600 243.500 397 242.500 395.500 242 393.800 242Z"/>
<text x="705" y="362" font-family="Liberation Sans, sans-serif" font-weight="bold" font-size="10.500" fill="#f4f4f4" textLength="11" lengthAdjust="spacingAndGlyphs">by</text>
<text x="704" y="377" font-family="Liberation Sans, sans-serif" font-weight="bold" font-size="11" fill="#f4f4f4" textLength="35" lengthAdjust="spacingAndGlyphs">AriArts</text>
</svg>
  </div>
  <div class="abs" id="att" style="left:20px;top:654px;width:487px;height:214px;border:1px solid #dcdfe6;border-radius:4px">
<div class="abs" style="left:10px;top:10px;line-height:20px;font-size:14px;font-weight:bold;color:#303133;white-space:nowrap">附件列表</div>
    <div class="abs" style="right:10px;top:9px;line-height:20px;font-size:14px;color:#303133;white-space:nowrap">共 4 个</div>
    <div class="row" style="top:36px"><svg style="left:10px;top:6px" width="17" height="20" viewBox="0 0 17 20" fill="none" stroke="#303133" stroke-width="1.300" stroke-linecap="round" stroke-linejoin="round"><path d="M3 19.300H2c-.8 0-1.300-.5-1.300-1.300V2c0-.8.500-1.300 1.300-1.300h8.500l5.800 5.300v12c0 .8-.5 1.300-1.300 1.300h-1"/><path d="M7.500 3.500v9" stroke-dasharray="1.300 1.300" stroke-width="2.200" stroke-linecap="butt"/><rect x="6" y="14.200" width="3" height="4.800" rx=".6"/></svg><span class="nm" style="letter-spacing:0.16px">cloud-mail-demo-1.0.0.zip</span><span class="sz" style="right:40px">1.84 MB</span><svg style="left:436px;top:8px" width="16" height="17" viewBox="0 0 16 17" fill="none" stroke="#73767a" stroke-width="1.300" stroke-linecap="round" stroke-linejoin="round"><path d="M8 0.700v11.600M3.300 7.700 8 12.400l4.700-4.700M0.700 16.100h14.600"/></svg></div>
    <div class="row" style="top:80px"><svg style="left:10px;top:8px" width="17" height="16" viewBox="0 0 17 16" fill="none" stroke="#303133" stroke-width="1.300" stroke-linecap="round" stroke-linejoin="round"><rect x="0.700" y="0.700" width="15.600" height="14.600" rx="1.200"/><path d="M0.900 12.300 6 7.500l3.600 4 2.600-2 4 3.300"/><circle cx="11.800" cy="4.600" r=".9" fill="#303133"/></svg><span class="nm">D133D468@F095A914.353F2368.png</span><span class="sz" style="right:70px">3.68 MB</span><svg style="left:404px;top:9px" width="20" height="15" viewBox="0 0 20 15" fill="none" stroke="#73767a" stroke-width="1.300" stroke-linecap="round" stroke-linejoin="round"><path d="M0.700 7.500C3 3.200 6.200 1 10 1s7 2.200 9.300 6.500C17 11.800 13.800 14 10 14S3 11.800.700 7.500z"/><circle cx="10" cy="7.500" r="2.800"/></svg><svg style="left:436px;top:8px" width="16" height="17" viewBox="0 0 16 17" fill="none" stroke="#73767a" stroke-width="1.300" stroke-linecap="round" stroke-linejoin="round"><path d="M8 0.700v11.600M3.300 7.700 8 12.400l4.700-4.700M0.700 16.100h14.600"/></svg></div>
    <div class="row" style="top:124px"><svg style="left:10px;top:8px" width="17" height="16" viewBox="0 0 17 16" fill="none" stroke="#303133" stroke-width="1.300" stroke-linecap="round" stroke-linejoin="round"><rect x="0.700" y="0.700" width="15.600" height="14.600" rx="1.200"/><path d="M0.900 12.300 6 7.500l3.600 4 2.600-2 4 3.300"/><circle cx="11.800" cy="4.600" r=".9" fill="#303133"/></svg><span class="nm" style="letter-spacing:0.33px">hero-background-campaign-alternate.png</span><span class="sz" style="right:70px">514.65 KB</span><svg style="left:404px;top:9px" width="20" height="15" viewBox="0 0 20 15" fill="none" stroke="#73767a" stroke-width="1.300" stroke-linecap="round" stroke-linejoin="round"><path d="M0.700 7.500C3 3.200 6.200 1 10 1s7 2.200 9.300 6.500C17 11.800 13.800 14 10 14S3 11.800.700 7.500z"/><circle cx="10" cy="7.500" r="2.800"/></svg><svg style="left:436px;top:8px" width="16" height="17" viewBox="0 0 16 17" fill="none" stroke="#73767a" stroke-width="1.300" stroke-linecap="round" stroke-linejoin="round"><path d="M8 0.700v11.600M3.300 7.700 8 12.400l4.700-4.700M0.700 16.100h14.600"/></svg></div>
    <div class="row" style="top:168px"><svg style="left:10px;top:6px" width="17" height="20" viewBox="0 0 17 20" fill="none" stroke="#303133" stroke-width="1.300" stroke-linecap="round" stroke-linejoin="round"><path d="M2.500 0.700h8l5.800 5.300v11.500c0 1-.8 1.800-1.800 1.800h-12c-1 0-1.800-.8-1.800-1.800v-15c0-1 .8-1.800 1.800-1.800z"/><path d="M4.200 9.700h8.600M4.200 12.500h8.600M4.200 15.300h5.500"/></svg><span class="nm">散文片段_时间与记忆.txt</span><span class="sz" style="right:40px">2.34 KB</span><svg style="left:436px;top:8px" width="16" height="17" viewBox="0 0 16 17" fill="none" stroke="#73767a" stroke-width="1.300" stroke-linecap="round" stroke-linejoin="round"><path d="M8 0.700v11.600M3.300 7.700 8 12.400l4.700-4.700M0.700 16.100h14.600"/></svg></div>

  </div>
</div>

<svg class="abs" style="left:1575px;top:922px" width="270" height="84" viewBox="0 0 270 84">
  <defs>
    <radialGradient id="wg" cx=".35" cy=".3" r=".9"><stop offset="0" stop-color="#ffb14a"/><stop offset=".45" stop-color="#f26a1e"/><stop offset="1" stop-color="#d8201c"/></radialGradient>
    <linearGradient id="wb" x1="0" y1="0" x2="1" y2="1"><stop offset="0" stop-color="#1d3f9a"/><stop offset="1" stop-color="#0f2a6e"/></linearGradient>
    <clipPath id="wc"><circle cx="48.300" cy="40" r="25.800"/></clipPath>
  </defs>
  <circle cx="48.300" cy="40" r="25.800" fill="url(#wg)"/>
  <path d="M10 20 L60 75 L10 75z" fill="#1c3c94" clip-path="url(#wc)" opacity=".9"/>
  <path d="M6.900 8.300C7 12 7.500 16 8.400 19.300 10 27 13 34 16.300 39.600 20 47 25 53 30.300 58.300 36 63.500 41 67 47.500 69.300 56 72.500 64 73.500 72.500 72.400 77 72 81 71 85 69.300 80 69 76 68 72.500 66.100 65 63.500 58 60.500 52.200 56.800 46 52.500 41 48 36.600 42.700 31 37 27 32 24 27 21.500 23 20 19.500 18.600 16.100 20.500 14 23.500 13 27.200 13 21 9 13 6.500 6.900 8.300z" fill="url(#wb)"/>
  <text transform="translate(22 58) skewX(-8)" font-family="'Liberation Serif','Noto Serif CJK SC',serif" font-weight="900" font-size="45" fill="#fff">源</text>
  <text transform="translate(74.500 54.500) skewX(-12)" font-family="'Liberation Serif','Noto Serif CJK SC',serif" font-weight="900" font-size="42" fill="#1c1c1c" textLength="172" lengthAdjust="spacing">码时代网</text>
  <text x="89.700" y="72.800" font-family="'DejaVu Sans',sans-serif" font-weight="normal" stroke="#111" stroke-width=".55" font-size="13.500" fill="#111" textLength="152.500" lengthAdjust="spacingAndGlyphs">www.ymsdw.com.cn</text>
</svg>
</body>
</html>
